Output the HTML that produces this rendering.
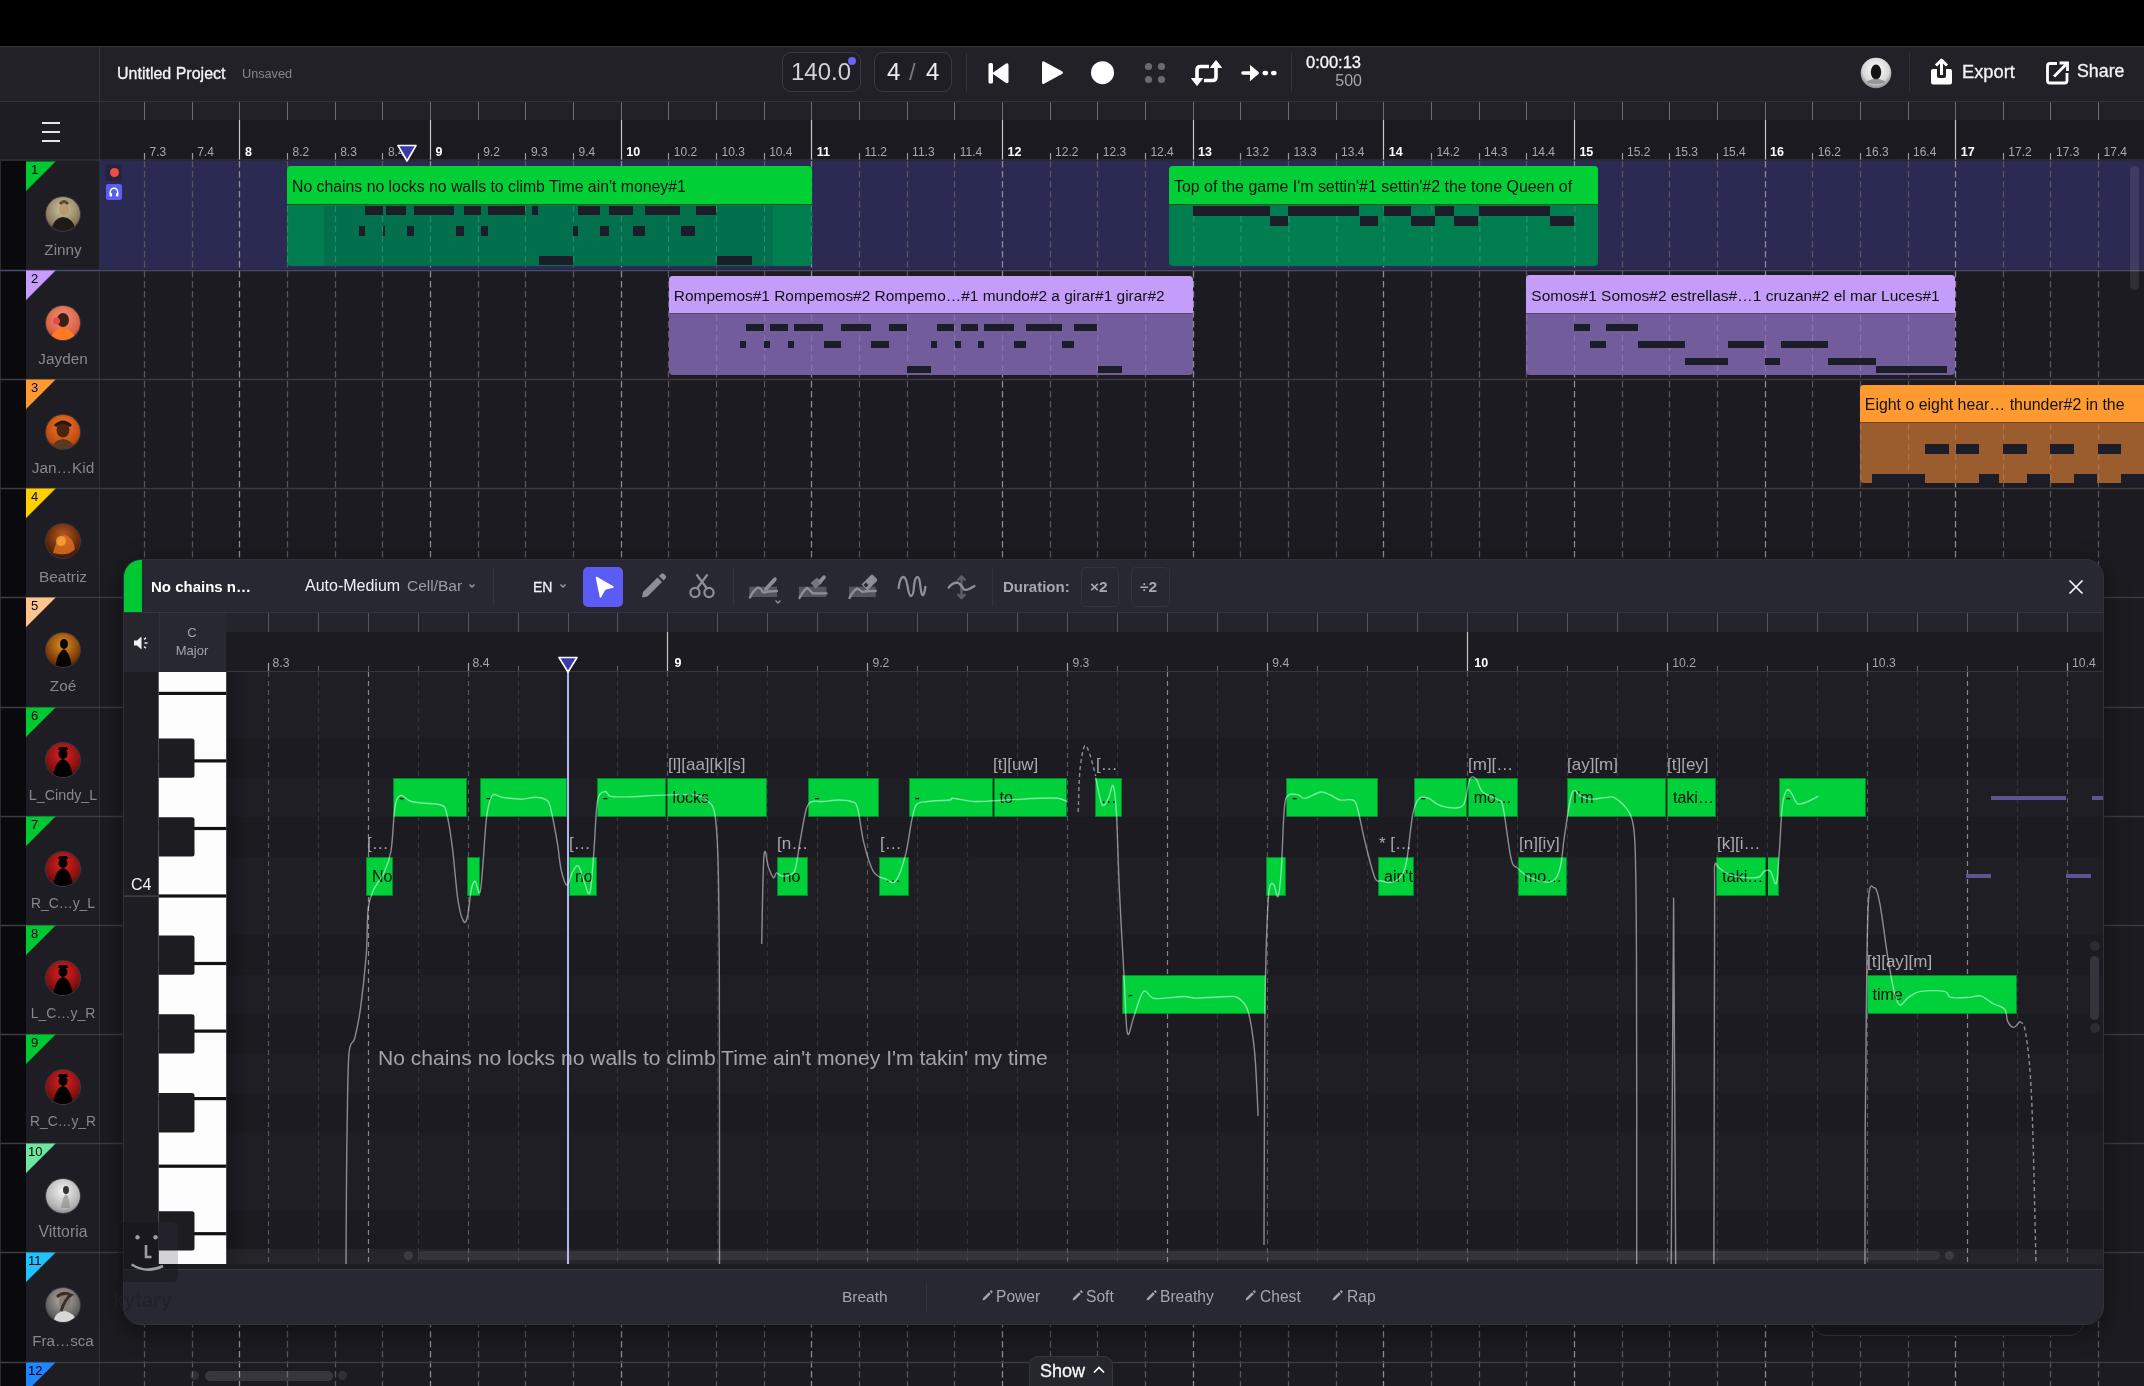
<!DOCTYPE html><html><head><meta charset="utf-8"><title>DAW</title><style>
*{margin:0;padding:0;box-sizing:border-box}
html,body{width:2144px;height:1386px;overflow:hidden;background:#000;font-family:"Liberation Sans", sans-serif;}
.a{position:absolute}
.t{position:absolute;white-space:nowrap;line-height:1}
</style></head><body>
<div class="a" style="left:0;top:46px;width:2144px;height:55px;background:#222127;border-top:1px solid #38373e;"></div>
<div class="a" style="left:99px;top:46px;width:1px;height:55px;background:#34343c"></div>
<div class="t" style="left:117px;top:66px;font-size:16px;color:#f4f4f6;-webkit-text-stroke:0.3px #f4f4f6;">Untitled Project</div>
<div class="t" style="left:242px;top:68px;font-size:12.7px;color:#86868e;">Unsaved</div>
<div class="a" style="left:782px;top:52px;width:79px;height:40px;border:1px solid #393a44;border-radius:9px;background:#1e1e24"></div>
<div class="t" style="left:791px;top:60px;font-size:24px;color:#d0d0d6;">140.0</div>
<div class="a" style="left:848px;top:57px;width:8px;height:8px;border-radius:50%;background:#6466f6"></div>
<div class="a" style="left:874px;top:52px;width:78px;height:40px;border:1px solid #393a44;border-radius:9px;background:#1e1e24"></div>
<div class="t" style="left:887px;top:60px;font-size:24px;color:#ececf0;">4</div>
<div class="t" style="left:909px;top:60px;font-size:24px;color:#77777f;">/</div>
<div class="t" style="left:926px;top:60px;font-size:24px;color:#ececf0;">4</div>
<div class="a" style="left:966px;top:53px;width:1px;height:39px;background:#33333b"></div>
<div class="a" style="left:1291px;top:53px;width:1px;height:39px;background:#33333b"></div>
<div class="a" style="left:1909px;top:53px;width:1px;height:39px;background:#33333b"></div>
<svg class="a" style="left:980px;top:55px" width="310" height="40" viewBox="980 55 310 40">
<rect x="988.5" y="63" width="4.5" height="20.5" rx="1.5" fill="#fff"/>
<path d="M992 73.2 L1006 63.5 Q1008.5 62.5 1008.5 65 L1008.5 81.5 Q1008.5 84 1006 83 Z" fill="#fff"/>
<path d="M1042 63 Q1042 60.5 1044.5 61.8 L1062 71.2 Q1064 72.6 1062 74 L1044.5 83.6 Q1042 85 1042 82.5 Z" fill="#fff"/>
<circle cx="1102.5" cy="72.7" r="11.5" fill="#fff"/>
<circle cx="1148.5" cy="66.5" r="3.6" fill="#6a6a72"/><circle cx="1161.5" cy="66.5" r="3.6" fill="#6a6a72"/>
<circle cx="1148.5" cy="79.5" r="3.6" fill="#6a6a72"/><circle cx="1161.5" cy="79.5" r="3.6" fill="#6a6a72"/>
<path d="M1197 83 L1197 70 Q1197 66.5 1200.5 66.5 L1209 66.5" stroke="#fff" stroke-width="3.6" fill="none"/>
<path d="M1216 63 L1216 77 Q1216 80.5 1212.5 80.5 L1204 80.5" stroke="#fff" stroke-width="3.6" fill="none"/>
<path d="M1191.5 78.5 L1197 85.5 L1202.5 78.5 Z" fill="#fff" stroke="#fff" stroke-width="1" stroke-linejoin="round"/>
<path d="M1210.5 67.5 L1216 60.5 L1221.5 67.5 Z" fill="#fff" stroke="#fff" stroke-width="1" stroke-linejoin="round"/>
<path d="M1243 73 L1252 73" stroke="#fff" stroke-width="3.6" stroke-linecap="round"/>
<path d="M1250 66 Q1249 64.5 1250.5 65.2 L1258.5 72 Q1259.5 73 1258.5 74 L1250.5 80.8 Q1249 81.5 1250 80Z" fill="#fff"/>
<ellipse cx="1265.3" cy="73" rx="2.8" ry="2.3" fill="#fff"/><ellipse cx="1273.8" cy="73" rx="2.8" ry="2.3" fill="#fff"/>
</svg>
<div class="t" style="left:1306px;top:54px;font-size:16.5px;color:#f6f6f8;-webkit-text-stroke:0.3px #f6f6f8;">0:00:13</div>
<div class="t" style="left:1362px;top:73px;font-size:16px;color:#a4a4ac;transform:translateX(-100%)">500</div>
<svg class="a" style="left:1858px;top:55px" width="36" height="36" viewBox="0 0 36 36">
<defs><radialGradient id="avg" cx="50%" cy="40%" r="60%"><stop offset="0" stop-color="#ffffff"/><stop offset="0.7" stop-color="#d8d8d8"/><stop offset="1" stop-color="#8a8a8a"/></radialGradient></defs>
<circle cx="18" cy="18" r="15.3" fill="url(#avg)"/>
<ellipse cx="18" cy="17" rx="5.2" ry="7.5" fill="#141414"/>
<path d="M8 27 Q18 20 28 27 Q18 31 8 27Z" fill="#6a6a6a" opacity=".6"/>
</svg>
<svg class="a" style="left:1928px;top:57px" width="28" height="30" viewBox="1928 57 28 30">
<path d="M1941.5 60 L1941.5 75" stroke="#fff" stroke-width="3"/>
<path d="M1936 65.5 L1941.5 60 L1947 65.5" stroke="#fff" stroke-width="3" fill="none" stroke-linejoin="round"/>
<path d="M1933 69 L1937 69 L1937 76 Q1937 78 1939 78 L1944 78 Q1946 78 1946 76 L1946 69 L1950 69 Q1952 69 1952 71 L1952 82.5 Q1952 84.5 1950 84.5 L1933 84.5 Q1931 84.5 1931 82.5 L1931 71 Q1931 69 1933 69Z" fill="#fff"/>
</svg>
<div class="t" style="left:1962px;top:63px;font-size:18.3px;color:#f4f4f6;-webkit-text-stroke:0.3px #f4f4f6;">Export</div>
<svg class="a" style="left:2044px;top:60px" width="26" height="26" viewBox="2044 60 26 26">
<path d="M2057 63.5 L2050 63.5 Q2047.5 63.5 2047.5 66 L2047.5 80.5 Q2047.5 83 2050 83 L2064.5 83 Q2067 83 2067 80.5 L2067 73" stroke="#fff" stroke-width="2.8" fill="none"/>
<path d="M2054 76.5 L2066 64.5" stroke="#fff" stroke-width="2.8"/>
<path d="M2059.5 63 L2067.5 63 L2067.5 71" stroke="#fff" stroke-width="2.8" fill="none"/>
</svg>
<div class="t" style="left:2077px;top:63px;font-size:17.8px;color:#f4f4f6;-webkit-text-stroke:0.3px #f4f4f6;">Share</div>
<div class="a" style="left:0;top:101px;width:2144px;height:60px;background:#1b1a20;border-top:1px solid #2f3040"></div>
<div class="a" style="left:100px;top:102px;width:2044px;height:18px;background:#222127"></div>
<div class="a" style="left:0;top:102px;width:99px;height:58px;background:#1e1d23"></div>
<div class="a" style="left:99px;top:101px;width:1px;height:60px;background:#30303a"></div>
<div class="a" style="left:42px;top:122px;width:18px;height:2px;background:#e6e6ea"></div>
<div class="a" style="left:42px;top:131px;width:18px;height:2px;background:#e6e6ea"></div>
<div class="a" style="left:42px;top:140px;width:18px;height:2px;background:#e6e6ea"></div>
<svg class="a" style="left:0;top:101px" width="2144" height="60" viewBox="0 101 2144 60"><line x1="144.5" y1="102" x2="144.5" y2="120" stroke="#6a6a72" stroke-width="1"/><line x1="144.5" y1="153" x2="144.5" y2="160" stroke="#9a9aa0" stroke-width="1.2"/><line x1="192.5" y1="102" x2="192.5" y2="120" stroke="#6a6a72" stroke-width="1"/><line x1="192.5" y1="153" x2="192.5" y2="160" stroke="#9a9aa0" stroke-width="1.2"/><line x1="239.5" y1="102" x2="239.5" y2="120" stroke="#6a6a72" stroke-width="1"/><line x1="239.5" y1="120" x2="239.5" y2="160" stroke="#c8c8cc" stroke-width="1.2"/><line x1="287.5" y1="102" x2="287.5" y2="120" stroke="#6a6a72" stroke-width="1"/><line x1="287.5" y1="153" x2="287.5" y2="160" stroke="#9a9aa0" stroke-width="1.2"/><line x1="335.5" y1="102" x2="335.5" y2="120" stroke="#6a6a72" stroke-width="1"/><line x1="335.5" y1="153" x2="335.5" y2="160" stroke="#9a9aa0" stroke-width="1.2"/><line x1="382.5" y1="102" x2="382.5" y2="120" stroke="#6a6a72" stroke-width="1"/><line x1="382.5" y1="153" x2="382.5" y2="160" stroke="#9a9aa0" stroke-width="1.2"/><line x1="430.5" y1="102" x2="430.5" y2="120" stroke="#6a6a72" stroke-width="1"/><line x1="430.5" y1="120" x2="430.5" y2="160" stroke="#c8c8cc" stroke-width="1.2"/><line x1="478.5" y1="102" x2="478.5" y2="120" stroke="#6a6a72" stroke-width="1"/><line x1="478.5" y1="153" x2="478.5" y2="160" stroke="#9a9aa0" stroke-width="1.2"/><line x1="525.5" y1="102" x2="525.5" y2="120" stroke="#6a6a72" stroke-width="1"/><line x1="525.5" y1="153" x2="525.5" y2="160" stroke="#9a9aa0" stroke-width="1.2"/><line x1="573.5" y1="102" x2="573.5" y2="120" stroke="#6a6a72" stroke-width="1"/><line x1="573.5" y1="153" x2="573.5" y2="160" stroke="#9a9aa0" stroke-width="1.2"/><line x1="621.5" y1="102" x2="621.5" y2="120" stroke="#6a6a72" stroke-width="1"/><line x1="621.5" y1="120" x2="621.5" y2="160" stroke="#c8c8cc" stroke-width="1.2"/><line x1="668.5" y1="102" x2="668.5" y2="120" stroke="#6a6a72" stroke-width="1"/><line x1="668.5" y1="153" x2="668.5" y2="160" stroke="#9a9aa0" stroke-width="1.2"/><line x1="716.5" y1="102" x2="716.5" y2="120" stroke="#6a6a72" stroke-width="1"/><line x1="716.5" y1="153" x2="716.5" y2="160" stroke="#9a9aa0" stroke-width="1.2"/><line x1="764.5" y1="102" x2="764.5" y2="120" stroke="#6a6a72" stroke-width="1"/><line x1="764.5" y1="153" x2="764.5" y2="160" stroke="#9a9aa0" stroke-width="1.2"/><line x1="811.5" y1="102" x2="811.5" y2="120" stroke="#6a6a72" stroke-width="1"/><line x1="811.5" y1="120" x2="811.5" y2="160" stroke="#c8c8cc" stroke-width="1.2"/><line x1="859.5" y1="102" x2="859.5" y2="120" stroke="#6a6a72" stroke-width="1"/><line x1="859.5" y1="153" x2="859.5" y2="160" stroke="#9a9aa0" stroke-width="1.2"/><line x1="907.5" y1="102" x2="907.5" y2="120" stroke="#6a6a72" stroke-width="1"/><line x1="907.5" y1="153" x2="907.5" y2="160" stroke="#9a9aa0" stroke-width="1.2"/><line x1="954.5" y1="102" x2="954.5" y2="120" stroke="#6a6a72" stroke-width="1"/><line x1="954.5" y1="153" x2="954.5" y2="160" stroke="#9a9aa0" stroke-width="1.2"/><line x1="1002.5" y1="102" x2="1002.5" y2="120" stroke="#6a6a72" stroke-width="1"/><line x1="1002.5" y1="120" x2="1002.5" y2="160" stroke="#c8c8cc" stroke-width="1.2"/><line x1="1050.5" y1="102" x2="1050.5" y2="120" stroke="#6a6a72" stroke-width="1"/><line x1="1050.5" y1="153" x2="1050.5" y2="160" stroke="#9a9aa0" stroke-width="1.2"/><line x1="1097.5" y1="102" x2="1097.5" y2="120" stroke="#6a6a72" stroke-width="1"/><line x1="1097.5" y1="153" x2="1097.5" y2="160" stroke="#9a9aa0" stroke-width="1.2"/><line x1="1145.5" y1="102" x2="1145.5" y2="120" stroke="#6a6a72" stroke-width="1"/><line x1="1145.5" y1="153" x2="1145.5" y2="160" stroke="#9a9aa0" stroke-width="1.2"/><line x1="1193.5" y1="102" x2="1193.5" y2="120" stroke="#6a6a72" stroke-width="1"/><line x1="1193.5" y1="120" x2="1193.5" y2="160" stroke="#c8c8cc" stroke-width="1.2"/><line x1="1240.5" y1="102" x2="1240.5" y2="120" stroke="#6a6a72" stroke-width="1"/><line x1="1240.5" y1="153" x2="1240.5" y2="160" stroke="#9a9aa0" stroke-width="1.2"/><line x1="1288.5" y1="102" x2="1288.5" y2="120" stroke="#6a6a72" stroke-width="1"/><line x1="1288.5" y1="153" x2="1288.5" y2="160" stroke="#9a9aa0" stroke-width="1.2"/><line x1="1336.5" y1="102" x2="1336.5" y2="120" stroke="#6a6a72" stroke-width="1"/><line x1="1336.5" y1="153" x2="1336.5" y2="160" stroke="#9a9aa0" stroke-width="1.2"/><line x1="1383.5" y1="102" x2="1383.5" y2="120" stroke="#6a6a72" stroke-width="1"/><line x1="1383.5" y1="120" x2="1383.5" y2="160" stroke="#c8c8cc" stroke-width="1.2"/><line x1="1431.5" y1="102" x2="1431.5" y2="120" stroke="#6a6a72" stroke-width="1"/><line x1="1431.5" y1="153" x2="1431.5" y2="160" stroke="#9a9aa0" stroke-width="1.2"/><line x1="1479.5" y1="102" x2="1479.5" y2="120" stroke="#6a6a72" stroke-width="1"/><line x1="1479.5" y1="153" x2="1479.5" y2="160" stroke="#9a9aa0" stroke-width="1.2"/><line x1="1526.5" y1="102" x2="1526.5" y2="120" stroke="#6a6a72" stroke-width="1"/><line x1="1526.5" y1="153" x2="1526.5" y2="160" stroke="#9a9aa0" stroke-width="1.2"/><line x1="1574.5" y1="102" x2="1574.5" y2="120" stroke="#6a6a72" stroke-width="1"/><line x1="1574.5" y1="120" x2="1574.5" y2="160" stroke="#c8c8cc" stroke-width="1.2"/><line x1="1622.5" y1="102" x2="1622.5" y2="120" stroke="#6a6a72" stroke-width="1"/><line x1="1622.5" y1="153" x2="1622.5" y2="160" stroke="#9a9aa0" stroke-width="1.2"/><line x1="1669.5" y1="102" x2="1669.5" y2="120" stroke="#6a6a72" stroke-width="1"/><line x1="1669.5" y1="153" x2="1669.5" y2="160" stroke="#9a9aa0" stroke-width="1.2"/><line x1="1717.5" y1="102" x2="1717.5" y2="120" stroke="#6a6a72" stroke-width="1"/><line x1="1717.5" y1="153" x2="1717.5" y2="160" stroke="#9a9aa0" stroke-width="1.2"/><line x1="1765.5" y1="102" x2="1765.5" y2="120" stroke="#6a6a72" stroke-width="1"/><line x1="1765.5" y1="120" x2="1765.5" y2="160" stroke="#c8c8cc" stroke-width="1.2"/><line x1="1812.5" y1="102" x2="1812.5" y2="120" stroke="#6a6a72" stroke-width="1"/><line x1="1812.5" y1="153" x2="1812.5" y2="160" stroke="#9a9aa0" stroke-width="1.2"/><line x1="1860.5" y1="102" x2="1860.5" y2="120" stroke="#6a6a72" stroke-width="1"/><line x1="1860.5" y1="153" x2="1860.5" y2="160" stroke="#9a9aa0" stroke-width="1.2"/><line x1="1908.5" y1="102" x2="1908.5" y2="120" stroke="#6a6a72" stroke-width="1"/><line x1="1908.5" y1="153" x2="1908.5" y2="160" stroke="#9a9aa0" stroke-width="1.2"/><line x1="1955.5" y1="102" x2="1955.5" y2="120" stroke="#6a6a72" stroke-width="1"/><line x1="1955.5" y1="120" x2="1955.5" y2="160" stroke="#c8c8cc" stroke-width="1.2"/><line x1="2003.5" y1="102" x2="2003.5" y2="120" stroke="#6a6a72" stroke-width="1"/><line x1="2003.5" y1="153" x2="2003.5" y2="160" stroke="#9a9aa0" stroke-width="1.2"/><line x1="2050.5" y1="102" x2="2050.5" y2="120" stroke="#6a6a72" stroke-width="1"/><line x1="2050.5" y1="153" x2="2050.5" y2="160" stroke="#9a9aa0" stroke-width="1.2"/><line x1="2098.5" y1="102" x2="2098.5" y2="120" stroke="#6a6a72" stroke-width="1"/><line x1="2098.5" y1="153" x2="2098.5" y2="160" stroke="#9a9aa0" stroke-width="1.2"/><line x1="0" y1="160" x2="2144" y2="160" stroke="#3a3a44" stroke-width="1"/></svg>
<div class="t" style="left:149.6px;top:146px;font-size:12px;color:#a8a8ae;">7.3</div>
<div class="t" style="left:197.2px;top:146px;font-size:12px;color:#a8a8ae;">7.4</div>
<div class="t" style="left:244.9px;top:146px;font-size:12.5px;font-weight:bold;color:#fff;">8</div>
<div class="t" style="left:292.6px;top:146px;font-size:12px;color:#a8a8ae;">8.2</div>
<div class="t" style="left:340.2px;top:146px;font-size:12px;color:#a8a8ae;">8.3</div>
<div class="t" style="left:387.9px;top:146px;font-size:12px;color:#a8a8ae;">8.4</div>
<div class="t" style="left:435.5px;top:146px;font-size:12.5px;font-weight:bold;color:#fff;">9</div>
<div class="t" style="left:483.2px;top:146px;font-size:12px;color:#a8a8ae;">9.2</div>
<div class="t" style="left:530.9px;top:146px;font-size:12px;color:#a8a8ae;">9.3</div>
<div class="t" style="left:578.5px;top:146px;font-size:12px;color:#a8a8ae;">9.4</div>
<div class="t" style="left:626.2px;top:146px;font-size:12.5px;font-weight:bold;color:#fff;">10</div>
<div class="t" style="left:673.8px;top:146px;font-size:12px;color:#a8a8ae;">10.2</div>
<div class="t" style="left:721.5px;top:146px;font-size:12px;color:#a8a8ae;">10.3</div>
<div class="t" style="left:769.2px;top:146px;font-size:12px;color:#a8a8ae;">10.4</div>
<div class="t" style="left:816.8px;top:146px;font-size:12.5px;font-weight:bold;color:#fff;">11</div>
<div class="t" style="left:864.5px;top:146px;font-size:12px;color:#a8a8ae;">11.2</div>
<div class="t" style="left:912.1px;top:146px;font-size:12px;color:#a8a8ae;">11.3</div>
<div class="t" style="left:959.8px;top:146px;font-size:12px;color:#a8a8ae;">11.4</div>
<div class="t" style="left:1007.5px;top:146px;font-size:12.5px;font-weight:bold;color:#fff;">12</div>
<div class="t" style="left:1055.1px;top:146px;font-size:12px;color:#a8a8ae;">12.2</div>
<div class="t" style="left:1102.8px;top:146px;font-size:12px;color:#a8a8ae;">12.3</div>
<div class="t" style="left:1150.4px;top:146px;font-size:12px;color:#a8a8ae;">12.4</div>
<div class="t" style="left:1198.1px;top:146px;font-size:12.5px;font-weight:bold;color:#fff;">13</div>
<div class="t" style="left:1245.8px;top:146px;font-size:12px;color:#a8a8ae;">13.2</div>
<div class="t" style="left:1293.4px;top:146px;font-size:12px;color:#a8a8ae;">13.3</div>
<div class="t" style="left:1341.1px;top:146px;font-size:12px;color:#a8a8ae;">13.4</div>
<div class="t" style="left:1388.7px;top:146px;font-size:12.5px;font-weight:bold;color:#fff;">14</div>
<div class="t" style="left:1436.4px;top:146px;font-size:12px;color:#a8a8ae;">14.2</div>
<div class="t" style="left:1484.1px;top:146px;font-size:12px;color:#a8a8ae;">14.3</div>
<div class="t" style="left:1531.7px;top:146px;font-size:12px;color:#a8a8ae;">14.4</div>
<div class="t" style="left:1579.4px;top:146px;font-size:12.5px;font-weight:bold;color:#fff;">15</div>
<div class="t" style="left:1627.0px;top:146px;font-size:12px;color:#a8a8ae;">15.2</div>
<div class="t" style="left:1674.7px;top:146px;font-size:12px;color:#a8a8ae;">15.3</div>
<div class="t" style="left:1722.4px;top:146px;font-size:12px;color:#a8a8ae;">15.4</div>
<div class="t" style="left:1770.0px;top:146px;font-size:12.5px;font-weight:bold;color:#fff;">16</div>
<div class="t" style="left:1817.7px;top:146px;font-size:12px;color:#a8a8ae;">16.2</div>
<div class="t" style="left:1865.3px;top:146px;font-size:12px;color:#a8a8ae;">16.3</div>
<div class="t" style="left:1913.0px;top:146px;font-size:12px;color:#a8a8ae;">16.4</div>
<div class="t" style="left:1960.7px;top:146px;font-size:12.5px;font-weight:bold;color:#fff;">17</div>
<div class="t" style="left:2008.3px;top:146px;font-size:12px;color:#a8a8ae;">17.2</div>
<div class="t" style="left:2056.0px;top:146px;font-size:12px;color:#a8a8ae;">17.3</div>
<div class="t" style="left:2103.6px;top:146px;font-size:12px;color:#a8a8ae;">17.4</div>
<div class="a" style="left:0;top:161px;width:2144px;height:1225px;background:#1c1b21"></div>
<div class="a" style="left:100px;top:161px;width:2044px;height:108px;background:#2b2a52"></div>
<div class="a" style="left:0;top:161px;width:26px;height:1225px;background:#0a0a0d"></div>
<div class="a" style="left:26px;top:161px;width:73px;height:1225px;background:#1e1d23"></div>
<div class="a" style="left:99px;top:161px;width:1px;height:1225px;background:#2e2e36"></div>
<div class="a" style="left:0;top:161px;width:1px;height:1225px;background:#2a2a30"></div>
<svg class="a" style="left:0;top:0" width="2144" height="1386" viewBox="0 0 2144 1386"><line x1="144.5" y1="161" x2="144.5" y2="1386" stroke="#56555c" stroke-width="1.3" stroke-dasharray="6.5 3.5"/><line x1="192.5" y1="161" x2="192.5" y2="1386" stroke="#56555c" stroke-width="1.3" stroke-dasharray="6.5 3.5"/><line x1="239.5" y1="161" x2="239.5" y2="1386" stroke="#8c8c92" stroke-width="1.3" stroke-dasharray="6.5 3.5"/><line x1="287.5" y1="161" x2="287.5" y2="1386" stroke="#56555c" stroke-width="1.3" stroke-dasharray="6.5 3.5"/><line x1="335.5" y1="161" x2="335.5" y2="1386" stroke="#56555c" stroke-width="1.3" stroke-dasharray="6.5 3.5"/><line x1="382.5" y1="161" x2="382.5" y2="1386" stroke="#56555c" stroke-width="1.3" stroke-dasharray="6.5 3.5"/><line x1="430.5" y1="161" x2="430.5" y2="1386" stroke="#8c8c92" stroke-width="1.3" stroke-dasharray="6.5 3.5"/><line x1="478.5" y1="161" x2="478.5" y2="1386" stroke="#56555c" stroke-width="1.3" stroke-dasharray="6.5 3.5"/><line x1="525.5" y1="161" x2="525.5" y2="1386" stroke="#56555c" stroke-width="1.3" stroke-dasharray="6.5 3.5"/><line x1="573.5" y1="161" x2="573.5" y2="1386" stroke="#56555c" stroke-width="1.3" stroke-dasharray="6.5 3.5"/><line x1="621.5" y1="161" x2="621.5" y2="1386" stroke="#8c8c92" stroke-width="1.3" stroke-dasharray="6.5 3.5"/><line x1="668.5" y1="161" x2="668.5" y2="1386" stroke="#56555c" stroke-width="1.3" stroke-dasharray="6.5 3.5"/><line x1="716.5" y1="161" x2="716.5" y2="1386" stroke="#56555c" stroke-width="1.3" stroke-dasharray="6.5 3.5"/><line x1="764.5" y1="161" x2="764.5" y2="1386" stroke="#56555c" stroke-width="1.3" stroke-dasharray="6.5 3.5"/><line x1="811.5" y1="161" x2="811.5" y2="1386" stroke="#8c8c92" stroke-width="1.3" stroke-dasharray="6.5 3.5"/><line x1="859.5" y1="161" x2="859.5" y2="1386" stroke="#56555c" stroke-width="1.3" stroke-dasharray="6.5 3.5"/><line x1="907.5" y1="161" x2="907.5" y2="1386" stroke="#56555c" stroke-width="1.3" stroke-dasharray="6.5 3.5"/><line x1="954.5" y1="161" x2="954.5" y2="1386" stroke="#56555c" stroke-width="1.3" stroke-dasharray="6.5 3.5"/><line x1="1002.5" y1="161" x2="1002.5" y2="1386" stroke="#8c8c92" stroke-width="1.3" stroke-dasharray="6.5 3.5"/><line x1="1050.5" y1="161" x2="1050.5" y2="1386" stroke="#56555c" stroke-width="1.3" stroke-dasharray="6.5 3.5"/><line x1="1097.5" y1="161" x2="1097.5" y2="1386" stroke="#56555c" stroke-width="1.3" stroke-dasharray="6.5 3.5"/><line x1="1145.5" y1="161" x2="1145.5" y2="1386" stroke="#56555c" stroke-width="1.3" stroke-dasharray="6.5 3.5"/><line x1="1193.5" y1="161" x2="1193.5" y2="1386" stroke="#8c8c92" stroke-width="1.3" stroke-dasharray="6.5 3.5"/><line x1="1240.5" y1="161" x2="1240.5" y2="1386" stroke="#56555c" stroke-width="1.3" stroke-dasharray="6.5 3.5"/><line x1="1288.5" y1="161" x2="1288.5" y2="1386" stroke="#56555c" stroke-width="1.3" stroke-dasharray="6.5 3.5"/><line x1="1336.5" y1="161" x2="1336.5" y2="1386" stroke="#56555c" stroke-width="1.3" stroke-dasharray="6.5 3.5"/><line x1="1383.5" y1="161" x2="1383.5" y2="1386" stroke="#8c8c92" stroke-width="1.3" stroke-dasharray="6.5 3.5"/><line x1="1431.5" y1="161" x2="1431.5" y2="1386" stroke="#56555c" stroke-width="1.3" stroke-dasharray="6.5 3.5"/><line x1="1479.5" y1="161" x2="1479.5" y2="1386" stroke="#56555c" stroke-width="1.3" stroke-dasharray="6.5 3.5"/><line x1="1526.5" y1="161" x2="1526.5" y2="1386" stroke="#56555c" stroke-width="1.3" stroke-dasharray="6.5 3.5"/><line x1="1574.5" y1="161" x2="1574.5" y2="1386" stroke="#8c8c92" stroke-width="1.3" stroke-dasharray="6.5 3.5"/><line x1="1622.5" y1="161" x2="1622.5" y2="1386" stroke="#56555c" stroke-width="1.3" stroke-dasharray="6.5 3.5"/><line x1="1669.5" y1="161" x2="1669.5" y2="1386" stroke="#56555c" stroke-width="1.3" stroke-dasharray="6.5 3.5"/><line x1="1717.5" y1="161" x2="1717.5" y2="1386" stroke="#56555c" stroke-width="1.3" stroke-dasharray="6.5 3.5"/><line x1="1765.5" y1="161" x2="1765.5" y2="1386" stroke="#8c8c92" stroke-width="1.3" stroke-dasharray="6.5 3.5"/><line x1="1812.5" y1="161" x2="1812.5" y2="1386" stroke="#56555c" stroke-width="1.3" stroke-dasharray="6.5 3.5"/><line x1="1860.5" y1="161" x2="1860.5" y2="1386" stroke="#56555c" stroke-width="1.3" stroke-dasharray="6.5 3.5"/><line x1="1908.5" y1="161" x2="1908.5" y2="1386" stroke="#56555c" stroke-width="1.3" stroke-dasharray="6.5 3.5"/><line x1="1955.5" y1="161" x2="1955.5" y2="1386" stroke="#8c8c92" stroke-width="1.3" stroke-dasharray="6.5 3.5"/><line x1="2003.5" y1="161" x2="2003.5" y2="1386" stroke="#56555c" stroke-width="1.3" stroke-dasharray="6.5 3.5"/><line x1="2050.5" y1="161" x2="2050.5" y2="1386" stroke="#56555c" stroke-width="1.3" stroke-dasharray="6.5 3.5"/><line x1="2098.5" y1="161" x2="2098.5" y2="1386" stroke="#56555c" stroke-width="1.3" stroke-dasharray="6.5 3.5"/><line x1="0" y1="270.5" x2="2144" y2="270.5" stroke="#4a4a72" stroke-width="1.3"/><line x1="0" y1="379.5" x2="2144" y2="379.5" stroke="#3c3b42" stroke-width="1.3"/><line x1="0" y1="488.5" x2="2144" y2="488.5" stroke="#3c3b42" stroke-width="1.3"/><line x1="0" y1="597.5" x2="2144" y2="597.5" stroke="#3c3b42" stroke-width="1.3"/><line x1="0" y1="707.5" x2="2144" y2="707.5" stroke="#3c3b42" stroke-width="1.3"/><line x1="0" y1="816.5" x2="2144" y2="816.5" stroke="#3c3b42" stroke-width="1.3"/><line x1="0" y1="925.5" x2="2144" y2="925.5" stroke="#3c3b42" stroke-width="1.3"/><line x1="0" y1="1034.5" x2="2144" y2="1034.5" stroke="#3c3b42" stroke-width="1.3"/><line x1="0" y1="1143.5" x2="2144" y2="1143.5" stroke="#3c3b42" stroke-width="1.3"/><line x1="0" y1="1252.5" x2="2144" y2="1252.5" stroke="#3c3b42" stroke-width="1.3"/><line x1="0" y1="1362.5" x2="2144" y2="1362.5" stroke="#3c3b42" stroke-width="1.3"/></svg>
<svg class="a" style="left:26px;top:160.6px" width="31" height="31"><path d="M0 0.5 L30 0.5 L0 30.5Z" fill="#00c832"/><path d="M30 0.5 L0 30.5" stroke="rgba(0,0,0,.55)" stroke-width="1"/></svg>
<div class="t" style="left:31px;top:162.6px;font-size:13px;color:#000;">1</div>
<div class="a" style="left:45px;top:195.6px;width:36px;height:36px;border-radius:50%;overflow:hidden;background:radial-gradient(circle at 50% 35%, #cfc6a8 0%, #8a7a5a 65%, #2a2420 100%);border:1px solid #3a3a40"><svg width="36" height="36" viewBox="0 0 36 36" style="position:absolute;left:-1px;top:-1px"><ellipse cx="19" cy="13" rx="5" ry="6.5" fill="#b89a70"/><path d="M6 36 Q8 22 18 21 Q29 22 31 36Z" fill="#1e1a18"/><path d="M15 8 Q19 3 23 8" stroke="#5a4a30" stroke-width="3" fill="none"/></svg></div>
<div class="t" style="left:63px;top:241.6px;font-size:15.3px;color:#88878e;transform:translateX(-50%)">Zinny</div>
<svg class="a" style="left:26px;top:269.8px" width="31" height="31"><path d="M0 0.5 L30 0.5 L0 30.5Z" fill="#c89cfa"/><path d="M30 0.5 L0 30.5" stroke="rgba(0,0,0,.55)" stroke-width="1"/></svg>
<div class="t" style="left:31px;top:271.8px;font-size:13px;color:#000;">2</div>
<div class="a" style="left:45px;top:304.8px;width:36px;height:36px;border-radius:50%;overflow:hidden;background:radial-gradient(circle at 50% 35%, #f0907a 0%, #d86040 65%, #402010 100%);border:1px solid #3a3a40"><svg width="36" height="36" viewBox="0 0 36 36" style="position:absolute;left:-1px;top:-1px"><ellipse cx="18" cy="15" rx="6" ry="7" fill="#3a2010"/><path d="M5 36 Q7 24 18 23 Q29 24 31 36Z" fill="#ff7a20"/><circle cx="11.5" cy="16" r="3.5" fill="#e84a4a"/></svg></div>
<div class="t" style="left:63px;top:350.8px;font-size:15.3px;color:#88878e;transform:translateX(-50%)">Jayden</div>
<svg class="a" style="left:26px;top:379.0px" width="31" height="31"><path d="M0 0.5 L30 0.5 L0 30.5Z" fill="#ff9a33"/><path d="M30 0.5 L0 30.5" stroke="rgba(0,0,0,.55)" stroke-width="1"/></svg>
<div class="t" style="left:31px;top:381.0px;font-size:13px;color:#000;">3</div>
<div class="a" style="left:45px;top:414.0px;width:36px;height:36px;border-radius:50%;overflow:hidden;background:radial-gradient(circle at 50% 35%, #f07828 0%, #c04a10 65%, #301808 100%);border:1px solid #3a3a40"><svg width="36" height="36" viewBox="0 0 36 36" style="position:absolute;left:-1px;top:-1px"><ellipse cx="18" cy="16" rx="6.5" ry="7.5" fill="#4a2410"/><path d="M6 36 Q8 26 18 25 Q28 26 30 36Z" fill="#5a3a20"/><path d="M10 12 Q18 4 26 12" stroke="#2a1408" stroke-width="3" fill="none"/></svg></div>
<div class="t" style="left:63px;top:460.0px;font-size:15.4px;color:#88878e;transform:translateX(-50%)">Jan…Kid</div>
<svg class="a" style="left:26px;top:488.1px" width="31" height="31"><path d="M0 0.5 L30 0.5 L0 30.5Z" fill="#ffd000"/><path d="M30 0.5 L0 30.5" stroke="rgba(0,0,0,.55)" stroke-width="1"/></svg>
<div class="t" style="left:31px;top:490.1px;font-size:13px;color:#000;">4</div>
<div class="a" style="left:45px;top:523.1px;width:36px;height:36px;border-radius:50%;overflow:hidden;background:radial-gradient(circle at 50% 35%, #b85a20 0%, #5a2408 65%, #1a0a04 100%);border:1px solid #3a3a40"><svg width="36" height="36" viewBox="0 0 36 36" style="position:absolute;left:-1px;top:-1px"><path d="M8 30 Q12 14 20 12 Q28 14 30 26 Q24 34 8 30Z" fill="#e07020" opacity=".8"/><circle cx="16" cy="18" r="5" fill="#ffb040" opacity=".7"/></svg></div>
<div class="t" style="left:63px;top:569.1px;font-size:15.5px;color:#88878e;transform:translateX(-50%)">Beatriz</div>
<svg class="a" style="left:26px;top:597.3px" width="31" height="31"><path d="M0 0.5 L30 0.5 L0 30.5Z" fill="#ffc48e"/><path d="M30 0.5 L0 30.5" stroke="rgba(0,0,0,.55)" stroke-width="1"/></svg>
<div class="t" style="left:31px;top:599.3px;font-size:13px;color:#000;">5</div>
<div class="a" style="left:45px;top:632.3px;width:36px;height:36px;border-radius:50%;overflow:hidden;background:radial-gradient(circle at 50% 35%, #e09020 0%, #7a3a08 65%, #0a0604 100%);border:1px solid #3a3a40"><svg width="36" height="36" viewBox="0 0 36 36" style="position:absolute;left:-1px;top:-1px"><ellipse cx="19" cy="12" rx="4" ry="5" fill="#0a0604"/><path d="M10 36 Q12 20 19 17 Q25 20 27 36Z" fill="#0a0604"/></svg></div>
<div class="t" style="left:63px;top:678.3px;font-size:15.3px;color:#88878e;transform:translateX(-50%)">Zoé</div>
<svg class="a" style="left:26px;top:706.5px" width="31" height="31"><path d="M0 0.5 L30 0.5 L0 30.5Z" fill="#00c832"/><path d="M30 0.5 L0 30.5" stroke="rgba(0,0,0,.55)" stroke-width="1"/></svg>
<div class="t" style="left:31px;top:708.5px;font-size:13px;color:#000;">6</div>
<div class="a" style="left:45px;top:741.5px;width:36px;height:36px;border-radius:50%;overflow:hidden;background:radial-gradient(circle at 50% 35%, #e02020 0%, #801010 65%, #000 100%);border:1px solid #3a3a40"><svg width="36" height="36" viewBox="0 0 36 36" style="position:absolute;left:-1px;top:-1px"><ellipse cx="18" cy="12" rx="4.5" ry="5" fill="#000"/><path d="M8 36 Q10 19 18 17 Q26 19 28 36Z" fill="#000"/><path d="M13 8 L23 8 L22 5 L14 5Z" fill="#000"/></svg></div>
<div class="t" style="left:63px;top:787.5px;font-size:14.3px;color:#88878e;transform:translateX(-50%)">L_Cindy_L</div>
<svg class="a" style="left:26px;top:815.7px" width="31" height="31"><path d="M0 0.5 L30 0.5 L0 30.5Z" fill="#00c832"/><path d="M30 0.5 L0 30.5" stroke="rgba(0,0,0,.55)" stroke-width="1"/></svg>
<div class="t" style="left:31px;top:817.7px;font-size:13px;color:#000;">7</div>
<div class="a" style="left:45px;top:850.7px;width:36px;height:36px;border-radius:50%;overflow:hidden;background:radial-gradient(circle at 50% 35%, #e02020 0%, #801010 65%, #000 100%);border:1px solid #3a3a40"><svg width="36" height="36" viewBox="0 0 36 36" style="position:absolute;left:-1px;top:-1px"><ellipse cx="18" cy="12" rx="4.5" ry="5" fill="#000"/><path d="M8 36 Q10 19 18 17 Q26 19 28 36Z" fill="#000"/><path d="M13 8 L23 8 L22 5 L14 5Z" fill="#000"/></svg></div>
<div class="t" style="left:63px;top:896.7px;font-size:13.9px;color:#88878e;transform:translateX(-50%)">R_C…y_L</div>
<svg class="a" style="left:26px;top:924.9px" width="31" height="31"><path d="M0 0.5 L30 0.5 L0 30.5Z" fill="#00c832"/><path d="M30 0.5 L0 30.5" stroke="rgba(0,0,0,.55)" stroke-width="1"/></svg>
<div class="t" style="left:31px;top:926.9px;font-size:13px;color:#000;">8</div>
<div class="a" style="left:45px;top:959.9px;width:36px;height:36px;border-radius:50%;overflow:hidden;background:radial-gradient(circle at 50% 35%, #e02020 0%, #801010 65%, #000 100%);border:1px solid #3a3a40"><svg width="36" height="36" viewBox="0 0 36 36" style="position:absolute;left:-1px;top:-1px"><ellipse cx="18" cy="12" rx="4.5" ry="5" fill="#000"/><path d="M8 36 Q10 19 18 17 Q26 19 28 36Z" fill="#000"/><path d="M13 8 L23 8 L22 5 L14 5Z" fill="#000"/></svg></div>
<div class="t" style="left:63px;top:1005.9px;font-size:14px;color:#88878e;transform:translateX(-50%)">L_C…y_R</div>
<svg class="a" style="left:26px;top:1034.0px" width="31" height="31"><path d="M0 0.5 L30 0.5 L0 30.5Z" fill="#00c832"/><path d="M30 0.5 L0 30.5" stroke="rgba(0,0,0,.55)" stroke-width="1"/></svg>
<div class="t" style="left:31px;top:1036.0px;font-size:13px;color:#000;">9</div>
<div class="a" style="left:45px;top:1069.0px;width:36px;height:36px;border-radius:50%;overflow:hidden;background:radial-gradient(circle at 50% 35%, #e02020 0%, #801010 65%, #000 100%);border:1px solid #3a3a40"><svg width="36" height="36" viewBox="0 0 36 36" style="position:absolute;left:-1px;top:-1px"><ellipse cx="18" cy="12" rx="4.5" ry="5" fill="#000"/><path d="M8 36 Q10 19 18 17 Q26 19 28 36Z" fill="#000"/><path d="M13 8 L23 8 L22 5 L14 5Z" fill="#000"/></svg></div>
<div class="t" style="left:63px;top:1115.0px;font-size:13.8px;color:#88878e;transform:translateX(-50%)">R_C…y_R</div>
<svg class="a" style="left:26px;top:1143.2px" width="31" height="31"><path d="M0 0.5 L30 0.5 L0 30.5Z" fill="#6fe6a0"/><path d="M30 0.5 L0 30.5" stroke="rgba(0,0,0,.55)" stroke-width="1"/></svg>
<div class="t" style="left:28px;top:1145.2px;font-size:13px;color:#000;">10</div>
<div class="a" style="left:45px;top:1178.2px;width:36px;height:36px;border-radius:50%;overflow:hidden;background:radial-gradient(circle at 50% 35%, #f4f4f4 0%, #b0b0b0 65%, #606060 100%);border:1px solid #3a3a40"><svg width="36" height="36" viewBox="0 0 36 36" style="position:absolute;left:-1px;top:-1px"><ellipse cx="21" cy="12" rx="3" ry="4" fill="#333"/><path d="M16 30 Q18 18 21 16 Q24 18 25 30Z" fill="#888" opacity=".6"/></svg></div>
<div class="t" style="left:63px;top:1224.2px;font-size:15.8px;color:#88878e;transform:translateX(-50%)">Vittoria</div>
<svg class="a" style="left:26px;top:1252.4px" width="31" height="31"><path d="M0 0.5 L30 0.5 L0 30.5Z" fill="#1ec3ff"/><path d="M30 0.5 L0 30.5" stroke="rgba(0,0,0,.55)" stroke-width="1"/></svg>
<div class="t" style="left:28px;top:1254.4px;font-size:13px;color:#000;">11</div>
<div class="a" style="left:45px;top:1287.4px;width:36px;height:36px;border-radius:50%;overflow:hidden;background:radial-gradient(circle at 50% 35%, #b8b0a8 0%, #606060 65%, #303030 100%);border:1px solid #3a3a40"><svg width="36" height="36" viewBox="0 0 36 36" style="position:absolute;left:-1px;top:-1px"><ellipse cx="20" cy="15" rx="6" ry="8" fill="#8a7a70"/><path d="M8 36 Q10 24 20 24 Q30 26 32 36Z" fill="#d8d8d8"/><path d="M12 10 Q18 4 26 8 Q20 12 16 24" stroke="#3a302a" stroke-width="3" fill="none"/></svg></div>
<div class="t" style="left:63px;top:1333.4px;font-size:15.2px;color:#88878e;transform:translateX(-50%)">Fra…sca</div>
<svg class="a" style="left:26px;top:1361.6px" width="31" height="31"><path d="M0 0.5 L30 0.5 L0 30.5Z" fill="#1f86ff"/><path d="M30 0.5 L0 30.5" stroke="rgba(0,0,0,.55)" stroke-width="1"/></svg>
<div class="t" style="left:28px;top:1363.6px;font-size:13px;color:#000;">12</div>
<div class="a" style="left:105px;top:164px;width:17px;height:17px;border-radius:4px;background:#25243f"></div>
<div class="a" style="left:109.5px;top:168px;width:9px;height:9px;border-radius:50%;background:#ee4c44"></div>
<div class="a" style="left:106px;top:184px;width:16px;height:16px;border-radius:2px;background:#5a5ef0"></div>
<svg class="a" style="left:106px;top:184px" width="16" height="16"><path d="M4.3 10 L4.3 8 A3.7 3.7 0 0 1 11.7 8 L11.7 10" stroke="#fff" stroke-width="1.5" fill="none"/><rect x="3.5" y="9" width="2.6" height="3.5" rx="1" fill="#fff"/><rect x="9.9" y="9" width="2.6" height="3.5" rx="1" fill="#fff"/></svg>
<div class="a" style="left:2130px;top:166px;width:9px;height:124px;border-radius:5px;background:rgba(255,255,255,.09)"></div>
<div class="a" style="left:287.0px;top:166.3px;width:525.0px;height:99.5px;border-radius:4px;overflow:hidden;background:#007e4f"><div class="a" style="left:0;top:0;width:100%;height:38.5px;background:#00d035;border-bottom:1.5px solid rgba(0,0,0,.55)"></div><div class="t" style="left:5px;top:12.8px;font-size:15.8px;color:#111;">No chains no locks no walls to climb Time ain't money#1</div>
<div class="a" style="left:37px;top:39.5px;width:449px;height:61.0px;background:rgba(20,30,70,.14)"></div>
<svg class="a" style="left:0;top:39.5px" width="525.0" height="61.0"><line x1="0.5" y1="0" x2="0.5" y2="61.0" stroke="rgba(255,255,255,.16)" stroke-width="1.2" stroke-dasharray="6 4"/><line x1="48.5" y1="0" x2="48.5" y2="61.0" stroke="rgba(255,255,255,.16)" stroke-width="1.2" stroke-dasharray="6 4"/><line x1="95.5" y1="0" x2="95.5" y2="61.0" stroke="rgba(255,255,255,.16)" stroke-width="1.2" stroke-dasharray="6 4"/><line x1="143.5" y1="0" x2="143.5" y2="61.0" stroke="rgba(255,255,255,.16)" stroke-width="1.2" stroke-dasharray="6 4"/><line x1="191.5" y1="0" x2="191.5" y2="61.0" stroke="rgba(255,255,255,.16)" stroke-width="1.2" stroke-dasharray="6 4"/><line x1="238.5" y1="0" x2="238.5" y2="61.0" stroke="rgba(255,255,255,.16)" stroke-width="1.2" stroke-dasharray="6 4"/><line x1="286.5" y1="0" x2="286.5" y2="61.0" stroke="rgba(255,255,255,.16)" stroke-width="1.2" stroke-dasharray="6 4"/><line x1="334.5" y1="0" x2="334.5" y2="61.0" stroke="rgba(255,255,255,.16)" stroke-width="1.2" stroke-dasharray="6 4"/><line x1="381.5" y1="0" x2="381.5" y2="61.0" stroke="rgba(255,255,255,.16)" stroke-width="1.2" stroke-dasharray="6 4"/><line x1="429.5" y1="0" x2="429.5" y2="61.0" stroke="rgba(255,255,255,.16)" stroke-width="1.2" stroke-dasharray="6 4"/><line x1="477.5" y1="0" x2="477.5" y2="61.0" stroke="rgba(255,255,255,.16)" stroke-width="1.2" stroke-dasharray="6 4"/><line x1="524.5" y1="0" x2="524.5" y2="61.0" stroke="rgba(255,255,255,.16)" stroke-width="1.2" stroke-dasharray="6 4"/></svg>
<div class="a" style="left:78.0px;top:39.7px;width:17.5px;height:9.5px;background:#1b1e29"></div>
<div class="a" style="left:99.0px;top:39.7px;width:20.0px;height:9.5px;background:#1b1e29"></div>
<div class="a" style="left:126.5px;top:39.7px;width:17.1px;height:9.5px;background:#1b1e29"></div>
<div class="a" style="left:144.0px;top:39.7px;width:23.0px;height:9.5px;background:#1b1e29"></div>
<div class="a" style="left:177.0px;top:39.7px;width:17.0px;height:9.5px;background:#1b1e29"></div>
<div class="a" style="left:201.0px;top:39.7px;width:37.0px;height:9.5px;background:#1b1e29"></div>
<div class="a" style="left:245.0px;top:39.7px;width:6.0px;height:9.5px;background:#1b1e29"></div>
<div class="a" style="left:291.0px;top:39.7px;width:22.0px;height:9.5px;background:#1b1e29"></div>
<div class="a" style="left:322.0px;top:39.7px;width:24.0px;height:9.5px;background:#1b1e29"></div>
<div class="a" style="left:358.0px;top:39.7px;width:35.0px;height:9.5px;background:#1b1e29"></div>
<div class="a" style="left:408.6px;top:39.7px;width:20.4px;height:9.5px;background:#1b1e29"></div>
<div class="a" style="left:71.6px;top:59.7px;width:6.4px;height:9.6px;background:#1b1e29"></div>
<div class="a" style="left:96.0px;top:59.7px;width:2.0px;height:9.6px;background:#1b1e29"></div>
<div class="a" style="left:119.5px;top:59.7px;width:7.0px;height:9.6px;background:#1b1e29"></div>
<div class="a" style="left:169.0px;top:59.7px;width:8.0px;height:9.6px;background:#1b1e29"></div>
<div class="a" style="left:194.0px;top:59.7px;width:7.0px;height:9.6px;background:#1b1e29"></div>
<div class="a" style="left:286.0px;top:59.7px;width:5.0px;height:9.6px;background:#1b1e29"></div>
<div class="a" style="left:313.0px;top:59.7px;width:8.5px;height:9.6px;background:#1b1e29"></div>
<div class="a" style="left:346.0px;top:59.7px;width:12.0px;height:9.6px;background:#1b1e29"></div>
<div class="a" style="left:393.5px;top:59.7px;width:14.5px;height:9.6px;background:#1b1e29"></div>
<div class="a" style="left:252.0px;top:89.4px;width:34.0px;height:9.6px;background:#1b1e29"></div>
<div class="a" style="left:429.5px;top:89.4px;width:35.5px;height:9.6px;background:#1b1e29"></div>
</div>
<div class="a" style="left:1168.6px;top:166.0px;width:429.2px;height:99.6px;border-radius:4px;overflow:hidden;background:#007e4f"><div class="a" style="left:0;top:0;width:100%;height:39.0px;background:#00d035;border-bottom:1.5px solid rgba(0,0,0,.55)"></div><div class="t" style="left:5.4px;top:13.0px;font-size:15.95px;color:#111;">Top of the game I'm settin'#1 settin'#2 the tone Queen of</div>
<svg class="a" style="left:0;top:40.0px" width="429.2" height="60.6"><line x1="24.9" y1="0" x2="24.9" y2="60.6" stroke="rgba(255,255,255,.16)" stroke-width="1.2" stroke-dasharray="6 4"/><line x1="71.9" y1="0" x2="71.9" y2="60.6" stroke="rgba(255,255,255,.16)" stroke-width="1.2" stroke-dasharray="6 4"/><line x1="119.9" y1="0" x2="119.9" y2="60.6" stroke="rgba(255,255,255,.16)" stroke-width="1.2" stroke-dasharray="6 4"/><line x1="167.9" y1="0" x2="167.9" y2="60.6" stroke="rgba(255,255,255,.16)" stroke-width="1.2" stroke-dasharray="6 4"/><line x1="214.9" y1="0" x2="214.9" y2="60.6" stroke="rgba(255,255,255,.16)" stroke-width="1.2" stroke-dasharray="6 4"/><line x1="262.9" y1="0" x2="262.9" y2="60.6" stroke="rgba(255,255,255,.16)" stroke-width="1.2" stroke-dasharray="6 4"/><line x1="310.9" y1="0" x2="310.9" y2="60.6" stroke="rgba(255,255,255,.16)" stroke-width="1.2" stroke-dasharray="6 4"/><line x1="357.9" y1="0" x2="357.9" y2="60.6" stroke="rgba(255,255,255,.16)" stroke-width="1.2" stroke-dasharray="6 4"/><line x1="405.9" y1="0" x2="405.9" y2="60.6" stroke="rgba(255,255,255,.16)" stroke-width="1.2" stroke-dasharray="6 4"/></svg>
<div class="a" style="left:24.2px;top:40.0px;width:77.7px;height:9.6px;background:#1b1e29"></div>
<div class="a" style="left:119.4px;top:40.0px;width:71.0px;height:9.6px;background:#1b1e29"></div>
<div class="a" style="left:215.4px;top:40.0px;width:26.6px;height:9.6px;background:#1b1e29"></div>
<div class="a" style="left:266.4px;top:40.0px;width:19.0px;height:9.6px;background:#1b1e29"></div>
<div class="a" style="left:310.1px;top:40.0px;width:71.3px;height:9.6px;background:#1b1e29"></div>
<div class="a" style="left:101.9px;top:50.0px;width:17.8px;height:9.5px;background:#1b1e29"></div>
<div class="a" style="left:191.0px;top:50.0px;width:18.2px;height:9.5px;background:#1b1e29"></div>
<div class="a" style="left:242.0px;top:50.0px;width:24.7px;height:9.5px;background:#1b1e29"></div>
<div class="a" style="left:285.4px;top:50.0px;width:24.0px;height:9.5px;background:#1b1e29"></div>
<div class="a" style="left:381.4px;top:50.0px;width:24.0px;height:9.5px;background:#1b1e29"></div>
</div>
<div class="a" style="left:668.8px;top:275.5px;width:523.9px;height:99.0px;border-radius:4px;overflow:hidden;background:#725c9c"><div class="a" style="left:0;top:0;width:100%;height:38.5px;background:#c49dfa;border-bottom:1.5px solid rgba(0,0,0,.55)"></div><div class="t" style="left:5px;top:12.8px;font-size:15.45px;color:#111;">Rompemos#1 Rompemos#2 Rompemo…#1 mundo#2 a girar#1 girar#2</div>
<svg class="a" style="left:0;top:39.5px" width="523.9" height="60.5"><line x1="47.7" y1="0" x2="47.7" y2="60.5" stroke="rgba(255,255,255,.16)" stroke-width="1.2" stroke-dasharray="6 4"/><line x1="95.7" y1="0" x2="95.7" y2="60.5" stroke="rgba(255,255,255,.16)" stroke-width="1.2" stroke-dasharray="6 4"/><line x1="142.7" y1="0" x2="142.7" y2="60.5" stroke="rgba(255,255,255,.16)" stroke-width="1.2" stroke-dasharray="6 4"/><line x1="190.7" y1="0" x2="190.7" y2="60.5" stroke="rgba(255,255,255,.16)" stroke-width="1.2" stroke-dasharray="6 4"/><line x1="238.7" y1="0" x2="238.7" y2="60.5" stroke="rgba(255,255,255,.16)" stroke-width="1.2" stroke-dasharray="6 4"/><line x1="285.7" y1="0" x2="285.7" y2="60.5" stroke="rgba(255,255,255,.16)" stroke-width="1.2" stroke-dasharray="6 4"/><line x1="333.7" y1="0" x2="333.7" y2="60.5" stroke="rgba(255,255,255,.16)" stroke-width="1.2" stroke-dasharray="6 4"/><line x1="381.7" y1="0" x2="381.7" y2="60.5" stroke="rgba(255,255,255,.16)" stroke-width="1.2" stroke-dasharray="6 4"/><line x1="428.7" y1="0" x2="428.7" y2="60.5" stroke="rgba(255,255,255,.16)" stroke-width="1.2" stroke-dasharray="6 4"/><line x1="476.7" y1="0" x2="476.7" y2="60.5" stroke="rgba(255,255,255,.16)" stroke-width="1.2" stroke-dasharray="6 4"/><line x1="524.7" y1="0" x2="524.7" y2="60.5" stroke="rgba(255,255,255,.16)" stroke-width="1.2" stroke-dasharray="6 4"/></svg>
<div class="a" style="left:77.2px;top:48.1px;width:18.0px;height:7.4px;background:#1b1e29"></div>
<div class="a" style="left:101.2px;top:48.1px;width:18.0px;height:7.4px;background:#1b1e29"></div>
<div class="a" style="left:125.2px;top:48.1px;width:29.0px;height:7.4px;background:#1b1e29"></div>
<div class="a" style="left:172.2px;top:48.1px;width:30.0px;height:7.4px;background:#1b1e29"></div>
<div class="a" style="left:219.9px;top:48.1px;width:18.3px;height:7.4px;background:#1b1e29"></div>
<div class="a" style="left:267.8px;top:48.1px;width:17.4px;height:7.4px;background:#1b1e29"></div>
<div class="a" style="left:292.2px;top:48.1px;width:17.0px;height:7.4px;background:#1b1e29"></div>
<div class="a" style="left:315.2px;top:48.1px;width:30.0px;height:7.4px;background:#1b1e29"></div>
<div class="a" style="left:357.2px;top:48.1px;width:36.0px;height:7.4px;background:#1b1e29"></div>
<div class="a" style="left:405.2px;top:48.1px;width:23.0px;height:7.4px;background:#1b1e29"></div>
<div class="a" style="left:71.2px;top:65.5px;width:6.0px;height:6.6px;background:#1b1e29"></div>
<div class="a" style="left:95.2px;top:65.5px;width:6.0px;height:6.6px;background:#1b1e29"></div>
<div class="a" style="left:118.9px;top:65.5px;width:6.0px;height:6.6px;background:#1b1e29"></div>
<div class="a" style="left:154.9px;top:65.5px;width:17.7px;height:6.6px;background:#1b1e29"></div>
<div class="a" style="left:202.2px;top:65.5px;width:17.7px;height:6.6px;background:#1b1e29"></div>
<div class="a" style="left:262.0px;top:65.5px;width:5.8px;height:6.6px;background:#1b1e29"></div>
<div class="a" style="left:285.9px;top:65.5px;width:6.3px;height:6.6px;background:#1b1e29"></div>
<div class="a" style="left:309.2px;top:65.5px;width:6.0px;height:6.6px;background:#1b1e29"></div>
<div class="a" style="left:345.2px;top:65.5px;width:12.0px;height:6.6px;background:#1b1e29"></div>
<div class="a" style="left:393.0px;top:65.5px;width:12.2px;height:6.6px;background:#1b1e29"></div>
<div class="a" style="left:238.0px;top:90.2px;width:24.0px;height:7.6px;background:#1b1e29"></div>
<div class="a" style="left:429.0px;top:90.2px;width:24.2px;height:7.6px;background:#1b1e29"></div>
</div>
<div class="a" style="left:1526.0px;top:275.3px;width:429.0px;height:99.7px;border-radius:4px;overflow:hidden;background:#725c9c"><div class="a" style="left:0;top:0;width:100%;height:39.1px;background:#c49dfa;border-bottom:1.5px solid rgba(0,0,0,.55)"></div><div class="t" style="left:5.3px;top:13.0px;font-size:15.5px;color:#111;">Somos#1 Somos#2 estrellas#…1 cruzan#2 el mar Luces#1</div>
<svg class="a" style="left:0;top:40.1px" width="429.0" height="60.6"><line x1="0.5" y1="0" x2="0.5" y2="60.6" stroke="rgba(255,255,255,.16)" stroke-width="1.2" stroke-dasharray="6 4"/><line x1="48.5" y1="0" x2="48.5" y2="60.6" stroke="rgba(255,255,255,.16)" stroke-width="1.2" stroke-dasharray="6 4"/><line x1="96.5" y1="0" x2="96.5" y2="60.6" stroke="rgba(255,255,255,.16)" stroke-width="1.2" stroke-dasharray="6 4"/><line x1="143.5" y1="0" x2="143.5" y2="60.6" stroke="rgba(255,255,255,.16)" stroke-width="1.2" stroke-dasharray="6 4"/><line x1="191.5" y1="0" x2="191.5" y2="60.6" stroke="rgba(255,255,255,.16)" stroke-width="1.2" stroke-dasharray="6 4"/><line x1="239.5" y1="0" x2="239.5" y2="60.6" stroke="rgba(255,255,255,.16)" stroke-width="1.2" stroke-dasharray="6 4"/><line x1="286.5" y1="0" x2="286.5" y2="60.6" stroke="rgba(255,255,255,.16)" stroke-width="1.2" stroke-dasharray="6 4"/><line x1="334.5" y1="0" x2="334.5" y2="60.6" stroke="rgba(255,255,255,.16)" stroke-width="1.2" stroke-dasharray="6 4"/><line x1="382.5" y1="0" x2="382.5" y2="60.6" stroke="rgba(255,255,255,.16)" stroke-width="1.2" stroke-dasharray="6 4"/></svg>
<div class="a" style="left:47.6px;top:48.5px;width:16.4px;height:7.4px;background:#1b1e29"></div>
<div class="a" style="left:79.5px;top:48.5px;width:32.2px;height:7.4px;background:#1b1e29"></div>
<div class="a" style="left:64.0px;top:65.7px;width:15.5px;height:6.8px;background:#1b1e29"></div>
<div class="a" style="left:111.7px;top:65.7px;width:47.3px;height:6.8px;background:#1b1e29"></div>
<div class="a" style="left:202.0px;top:65.7px;width:36.0px;height:6.8px;background:#1b1e29"></div>
<div class="a" style="left:254.5px;top:65.7px;width:47.5px;height:6.8px;background:#1b1e29"></div>
<div class="a" style="left:159.0px;top:82.5px;width:43.0px;height:7.4px;background:#1b1e29"></div>
<div class="a" style="left:239.0px;top:82.5px;width:15.0px;height:7.4px;background:#1b1e29"></div>
<div class="a" style="left:302.0px;top:82.5px;width:47.8px;height:7.4px;background:#1b1e29"></div>
<div class="a" style="left:349.8px;top:90.7px;width:71.2px;height:7.5px;background:#1b1e29"></div>
</div>
<div class="a" style="left:1859.8px;top:384.7px;width:300.2px;height:98.8px;border-radius:4px;overflow:hidden;background:#9b5c2e"><div class="a" style="left:0;top:0;width:100%;height:38.3px;background:#ff9a30;border-bottom:1.5px solid rgba(0,0,0,.55)"></div><div class="t" style="left:5px;top:12.7px;font-size:15.9px;color:#111;">Eight o eight hear… thunder#2 in the</div>
<svg class="a" style="left:0;top:39.3px" width="300.2" height="60.5"><line x1="0.7" y1="0" x2="0.7" y2="60.5" stroke="rgba(255,255,255,.16)" stroke-width="1.2" stroke-dasharray="6 4"/><line x1="48.7" y1="0" x2="48.7" y2="60.5" stroke="rgba(255,255,255,.16)" stroke-width="1.2" stroke-dasharray="6 4"/><line x1="95.7" y1="0" x2="95.7" y2="60.5" stroke="rgba(255,255,255,.16)" stroke-width="1.2" stroke-dasharray="6 4"/><line x1="143.7" y1="0" x2="143.7" y2="60.5" stroke="rgba(255,255,255,.16)" stroke-width="1.2" stroke-dasharray="6 4"/><line x1="190.7" y1="0" x2="190.7" y2="60.5" stroke="rgba(255,255,255,.16)" stroke-width="1.2" stroke-dasharray="6 4"/><line x1="238.7" y1="0" x2="238.7" y2="60.5" stroke="rgba(255,255,255,.16)" stroke-width="1.2" stroke-dasharray="6 4"/></svg>
<div class="a" style="left:65.6px;top:59.8px;width:23.6px;height:9.5px;background:#1b1e29"></div>
<div class="a" style="left:95.8px;top:59.8px;width:23.1px;height:9.5px;background:#1b1e29"></div>
<div class="a" style="left:143.2px;top:59.8px;width:23.6px;height:9.5px;background:#1b1e29"></div>
<div class="a" style="left:190.2px;top:59.8px;width:24.0px;height:9.5px;background:#1b1e29"></div>
<div class="a" style="left:238.2px;top:59.8px;width:23.5px;height:9.5px;background:#1b1e29"></div>
<div class="a" style="left:12.2px;top:89.3px;width:53.4px;height:9.5px;background:#1b1e29"></div>
<div class="a" style="left:119.2px;top:89.3px;width:20.0px;height:9.5px;background:#1b1e29"></div>
<div class="a" style="left:166.8px;top:89.3px;width:23.4px;height:9.5px;background:#1b1e29"></div>
<div class="a" style="left:214.2px;top:89.3px;width:23.5px;height:9.5px;background:#1b1e29"></div>
<div class="a" style="left:261.7px;top:89.3px;width:28.5px;height:9.5px;background:#1b1e29"></div>
</div>
<svg class="a" style="left:396px;top:143px" width="22" height="20"><path d="M2 2.5 L20 2.5 L11 18 Z" fill="#3a3aa8" stroke="#fff" stroke-width="1.6" stroke-linejoin="round"/></svg>
<div class="a" style="left:1812px;top:1310px;width:272px;height:26px;border-radius:0 0 14px 14px;background:#1a1b22;border:1px solid #34353e"></div>
<div class="a" style="left:123px;top:558.5px;width:1980.5px;height:766.5px;border-radius:18px;background:#272832;overflow:hidden;box-shadow:0 6px 24px rgba(0,0,0,.45);border:1px solid #30313a">
<div class="a" style="left:-124px;top:-559.5px;width:2144px;height:1386px">
<div class="a" style="left:123px;top:558.5px;width:18.5px;height:54px;background:#00c832"></div>
<div class="a" style="left:123px;top:612.3px;width:1980.5px;height:1px;background:#34353f"></div>
<div class="t" style="left:151px;top:579px;font-size:15px;font-weight:bold;color:#fff;">No chains n…</div>
<div class="t" style="left:305px;top:578px;font-size:16px;color:#f2f2f4;">Auto-Medium</div>
<div class="t" style="left:407px;top:578px;font-size:15.5px;color:#9c9ca4;">Cell/Bar</div>
<svg class="a" style="left:467px;top:581px" width="10" height="10"><path d="M2.5 3.5 L5 6 L7.5 3.5" stroke="#9c9ca4" stroke-width="1.4" fill="none"/></svg>
<div class="a" style="left:493px;top:568px;width:1px;height:38px;background:#33343c"></div>
<div class="t" style="left:533px;top:580px;font-size:14px;color:#f2f2f4;-webkit-text-stroke:0.3px #f2f2f4;">EN</div>
<svg class="a" style="left:558px;top:581px" width="10" height="10"><path d="M2.5 3.5 L5 6 L7.5 3.5" stroke="#9c9ca4" stroke-width="1.4" fill="none"/></svg>
<div class="a" style="left:583px;top:567px;width:40px;height:40px;border-radius:5px;background:#5b5cf5"></div>
<svg class="a" style="left:583px;top:567px" width="40" height="40"><path d="M13.5 10.5 L30 20 L22 22 L17.5 30 Z" fill="#fff" stroke="#fff" stroke-width="1.5" stroke-linejoin="round"/></svg>
<svg class="a" style="left:638px;top:570px" width="30" height="32" viewBox="638 570 30 32">
<path d="M643 592 L657.5 577.5 L662 582 L647.5 596.5 L642 597.5 Z" fill="#8e8e96"/>
<path d="M659 576 L661 574 Q662.5 572.5 664 574 L665.5 575.5 Q667 577 665.5 578.5 L663.5 580.5 Z" fill="#8e8e96"/></svg>
<svg class="a" style="left:686px;top:570px" width="32" height="32" viewBox="686 570 32 32">
<circle cx="695" cy="592.5" r="4.6" stroke="#8e8e96" stroke-width="2.2" fill="none"/>
<circle cx="709" cy="592.5" r="4.6" stroke="#8e8e96" stroke-width="2.2" fill="none"/>
<path d="M697 588.5 L707.5 574.5 M707 588.5 L696.5 574.5" stroke="#8e8e96" stroke-width="2.2"/></svg>
<div class="a" style="left:732.5px;top:568px;width:1px;height:38px;background:#33343c"></div>
<svg class="a" style="left:740px;top:566px" width="250" height="44" viewBox="740 566 250 44">
<rect x="749.3" y="586.7" width="27.7" height="10.3" fill="#55555f"/>
<path d="M750 597.5 Q753 591 757.5 587.8 Q760 587 762.7 592 Q765 593 768 591.5 L777 591" stroke="#8e8e96" stroke-width="2.3" fill="none" stroke-linecap="round"/>
<path d="M764.5 588 L773 578.5 Q775 576.5 776.5 578 Q777.5 579.5 775.5 581.5 L767 590.5 L764 591Z" fill="#8e8e96"/>
<path d="M775.5 600.5 L778 603 L780.5 600.5" stroke="#8e8e96" stroke-width="1.3" fill="none"/>
<rect x="798.9" y="586.7" width="27.6" height="10.3" fill="#55555f"/>
<path d="M799.5 598 Q803 591 807 588 Q810 590 812.9 593.4 L826.5 593.4" stroke="#8e8e96" stroke-width="2.3" fill="none" stroke-linecap="round"/>
<path d="M818 581 L822.5 576 Q824 574.5 825.5 576 Q826.5 577.5 825 579 L820.5 584Z" fill="#8e8e96"/>
<path d="M810.5 583 L817 577.5 L822 583 L815.5 588.5Z" fill="#8e8e96" opacity=".75"/>
<rect x="849" y="586.7" width="26.8" height="10.3" fill="#55555f"/>
<path d="M849.5 598 Q853 591 857 588.5 Q860 590 862.5 592 Q866 591 870 591 L875.8 591" stroke="#8e8e96" stroke-width="2.3" fill="none" stroke-linecap="round"/>
<path d="M861.5 584.5 L870.5 575.5 Q872 574 873.5 575.5 L876.5 578.5 Q878 580 876.5 581.5 L867.5 590.5Z" fill="#8e8e96"/>
<path d="M863.5 585 L866 582.5 L868.5 585 L866 587.5Z" fill="#272832"/>
<path d="M898.6 588.2 Q900 577 903.2 577 Q906 577 907.5 586 Q909 596 911 596 Q913.5 596 914 586 Q915 577 917.5 577 Q919.5 577 920.5 587 Q921.5 596 923 595 Q924.5 594 925.4 587" stroke="#8e8e96" stroke-width="2.3" fill="none" stroke-linecap="round"/>
<path d="M961.5 576.5 L961.5 598 M957.5 580.5 L961.5 576.5 L965.5 580.5 M957.5 594 L961.5 598 L965.5 594" stroke="#5e5e68" stroke-width="2.4" fill="none"/>
<path d="M948.7 587.5 Q952 583 956.9 582.5 Q960 583 963.9 589.5 Q967 591 974.4 586" stroke="#8e8e96" stroke-width="2.3" fill="none" stroke-linecap="round"/>
</svg>
<div class="a" style="left:991.5px;top:568px;width:1px;height:38px;background:#33343c"></div>
<div class="t" style="left:1003px;top:579px;font-size:15px;font-weight:bold;color:#a6a7af;">Duration:</div>
<div class="a" style="left:1081px;top:567px;width:38px;height:40px;border-radius:5px;border:1px solid #33343d"></div>
<div class="t" style="left:1090px;top:579px;font-size:15.5px;font-weight:bold;color:#a6a7af;">×2</div>
<div class="a" style="left:1131px;top:567px;width:39px;height:40px;border-radius:5px;border:1px solid #33343d"></div>
<div class="t" style="left:1140px;top:579px;font-size:15.5px;font-weight:bold;color:#a6a7af;">÷2</div>
<svg class="a" style="left:2066px;top:577px" width="20" height="20"><path d="M3.5 3.5 L16.5 16.5 M16.5 3.5 L3.5 16.5" stroke="#fff" stroke-width="1.6"/></svg>
<div class="a" style="left:123px;top:613px;width:36px;height:58.5px;background:#25262e"></div>
<div class="a" style="left:159px;top:613px;width:67px;height:58.5px;background:#272832;border-left:1px solid #30313a"></div>
<div class="a" style="left:226px;top:613px;width:1877.5px;height:19px;background:#24252c"></div>
<div class="a" style="left:226px;top:632px;width:1877.5px;height:39.5px;background:#1c1b21"></div>
<div class="a" style="left:226px;top:671px;width:1877.5px;height:1px;background:#34343c"></div>
<svg class="a" style="left:133px;top:635px" width="16" height="16" viewBox="0 0 16 16">
<path d="M1 5.5 L4 5.5 L8.5 1.5 L8.5 14.5 L4 10.5 L1 10.5Z" fill="#f0f0f2"/>
<path d="M11 4.5 L13 2.8 M11.5 8 L14.5 8 M11 11.5 L13 13.2" stroke="#f0f0f2" stroke-width="1.4"/></svg>
<div class="t" style="left:192px;top:626px;font-size:13px;color:#a4a4ac;transform:translateX(-50%)">C</div>
<div class="t" style="left:192px;top:644px;font-size:13px;color:#a4a4ac;transform:translateX(-50%)">Major</div>
<svg class="a" style="left:0;top:0" width="2144" height="1386" viewBox="0 0 2144 1386"><line x1="268.5" y1="613" x2="268.5" y2="632" stroke="#55555e" stroke-width="1"/><line x1="268.5" y1="663" x2="268.5" y2="671" stroke="#a0a0a6" stroke-width="1.2"/><line x1="318.5" y1="613" x2="318.5" y2="632" stroke="#55555e" stroke-width="1"/><line x1="318.5" y1="666" x2="318.5" y2="671" stroke="#606068" stroke-width="1"/><line x1="368.5" y1="613" x2="368.5" y2="632" stroke="#55555e" stroke-width="1"/><line x1="368.5" y1="666" x2="368.5" y2="671" stroke="#606068" stroke-width="1"/><line x1="418.5" y1="613" x2="418.5" y2="632" stroke="#55555e" stroke-width="1"/><line x1="418.5" y1="666" x2="418.5" y2="671" stroke="#606068" stroke-width="1"/><line x1="468.5" y1="613" x2="468.5" y2="632" stroke="#55555e" stroke-width="1"/><line x1="468.5" y1="663" x2="468.5" y2="671" stroke="#a0a0a6" stroke-width="1.2"/><line x1="518.5" y1="613" x2="518.5" y2="632" stroke="#55555e" stroke-width="1"/><line x1="518.5" y1="666" x2="518.5" y2="671" stroke="#606068" stroke-width="1"/><line x1="568.5" y1="613" x2="568.5" y2="632" stroke="#55555e" stroke-width="1"/><line x1="568.5" y1="666" x2="568.5" y2="671" stroke="#606068" stroke-width="1"/><line x1="617.5" y1="613" x2="617.5" y2="632" stroke="#55555e" stroke-width="1"/><line x1="617.5" y1="666" x2="617.5" y2="671" stroke="#606068" stroke-width="1"/><line x1="667.5" y1="613" x2="667.5" y2="632" stroke="#55555e" stroke-width="1"/><line x1="667.5" y1="632" x2="667.5" y2="671" stroke="#c8c8cc" stroke-width="1.2"/><line x1="717.5" y1="613" x2="717.5" y2="632" stroke="#55555e" stroke-width="1"/><line x1="717.5" y1="666" x2="717.5" y2="671" stroke="#606068" stroke-width="1"/><line x1="767.5" y1="613" x2="767.5" y2="632" stroke="#55555e" stroke-width="1"/><line x1="767.5" y1="666" x2="767.5" y2="671" stroke="#606068" stroke-width="1"/><line x1="817.5" y1="613" x2="817.5" y2="632" stroke="#55555e" stroke-width="1"/><line x1="817.5" y1="666" x2="817.5" y2="671" stroke="#606068" stroke-width="1"/><line x1="867.5" y1="613" x2="867.5" y2="632" stroke="#55555e" stroke-width="1"/><line x1="867.5" y1="663" x2="867.5" y2="671" stroke="#a0a0a6" stroke-width="1.2"/><line x1="917.5" y1="613" x2="917.5" y2="632" stroke="#55555e" stroke-width="1"/><line x1="917.5" y1="666" x2="917.5" y2="671" stroke="#606068" stroke-width="1"/><line x1="967.5" y1="613" x2="967.5" y2="632" stroke="#55555e" stroke-width="1"/><line x1="967.5" y1="666" x2="967.5" y2="671" stroke="#606068" stroke-width="1"/><line x1="1017.5" y1="613" x2="1017.5" y2="632" stroke="#55555e" stroke-width="1"/><line x1="1017.5" y1="666" x2="1017.5" y2="671" stroke="#606068" stroke-width="1"/><line x1="1067.5" y1="613" x2="1067.5" y2="632" stroke="#55555e" stroke-width="1"/><line x1="1067.5" y1="663" x2="1067.5" y2="671" stroke="#a0a0a6" stroke-width="1.2"/><line x1="1117.5" y1="613" x2="1117.5" y2="632" stroke="#55555e" stroke-width="1"/><line x1="1117.5" y1="666" x2="1117.5" y2="671" stroke="#606068" stroke-width="1"/><line x1="1167.5" y1="613" x2="1167.5" y2="632" stroke="#55555e" stroke-width="1"/><line x1="1167.5" y1="666" x2="1167.5" y2="671" stroke="#606068" stroke-width="1"/><line x1="1217.5" y1="613" x2="1217.5" y2="632" stroke="#55555e" stroke-width="1"/><line x1="1217.5" y1="666" x2="1217.5" y2="671" stroke="#606068" stroke-width="1"/><line x1="1267.5" y1="613" x2="1267.5" y2="632" stroke="#55555e" stroke-width="1"/><line x1="1267.5" y1="663" x2="1267.5" y2="671" stroke="#a0a0a6" stroke-width="1.2"/><line x1="1317.5" y1="613" x2="1317.5" y2="632" stroke="#55555e" stroke-width="1"/><line x1="1317.5" y1="666" x2="1317.5" y2="671" stroke="#606068" stroke-width="1"/><line x1="1367.5" y1="613" x2="1367.5" y2="632" stroke="#55555e" stroke-width="1"/><line x1="1367.5" y1="666" x2="1367.5" y2="671" stroke="#606068" stroke-width="1"/><line x1="1417.5" y1="613" x2="1417.5" y2="632" stroke="#55555e" stroke-width="1"/><line x1="1417.5" y1="666" x2="1417.5" y2="671" stroke="#606068" stroke-width="1"/><line x1="1467.5" y1="613" x2="1467.5" y2="632" stroke="#55555e" stroke-width="1"/><line x1="1467.5" y1="632" x2="1467.5" y2="671" stroke="#c8c8cc" stroke-width="1.2"/><line x1="1517.5" y1="613" x2="1517.5" y2="632" stroke="#55555e" stroke-width="1"/><line x1="1517.5" y1="666" x2="1517.5" y2="671" stroke="#606068" stroke-width="1"/><line x1="1567.5" y1="613" x2="1567.5" y2="632" stroke="#55555e" stroke-width="1"/><line x1="1567.5" y1="666" x2="1567.5" y2="671" stroke="#606068" stroke-width="1"/><line x1="1617.5" y1="613" x2="1617.5" y2="632" stroke="#55555e" stroke-width="1"/><line x1="1617.5" y1="666" x2="1617.5" y2="671" stroke="#606068" stroke-width="1"/><line x1="1667.5" y1="613" x2="1667.5" y2="632" stroke="#55555e" stroke-width="1"/><line x1="1667.5" y1="663" x2="1667.5" y2="671" stroke="#a0a0a6" stroke-width="1.2"/><line x1="1717.5" y1="613" x2="1717.5" y2="632" stroke="#55555e" stroke-width="1"/><line x1="1717.5" y1="666" x2="1717.5" y2="671" stroke="#606068" stroke-width="1"/><line x1="1767.5" y1="613" x2="1767.5" y2="632" stroke="#55555e" stroke-width="1"/><line x1="1767.5" y1="666" x2="1767.5" y2="671" stroke="#606068" stroke-width="1"/><line x1="1817.5" y1="613" x2="1817.5" y2="632" stroke="#55555e" stroke-width="1"/><line x1="1817.5" y1="666" x2="1817.5" y2="671" stroke="#606068" stroke-width="1"/><line x1="1867.5" y1="613" x2="1867.5" y2="632" stroke="#55555e" stroke-width="1"/><line x1="1867.5" y1="663" x2="1867.5" y2="671" stroke="#a0a0a6" stroke-width="1.2"/><line x1="1917.5" y1="613" x2="1917.5" y2="632" stroke="#55555e" stroke-width="1"/><line x1="1917.5" y1="666" x2="1917.5" y2="671" stroke="#606068" stroke-width="1"/><line x1="1967.5" y1="613" x2="1967.5" y2="632" stroke="#55555e" stroke-width="1"/><line x1="1967.5" y1="666" x2="1967.5" y2="671" stroke="#606068" stroke-width="1"/><line x1="2017.5" y1="613" x2="2017.5" y2="632" stroke="#55555e" stroke-width="1"/><line x1="2017.5" y1="666" x2="2017.5" y2="671" stroke="#606068" stroke-width="1"/><line x1="2067.5" y1="613" x2="2067.5" y2="632" stroke="#55555e" stroke-width="1"/><line x1="2067.5" y1="663" x2="2067.5" y2="671" stroke="#a0a0a6" stroke-width="1.2"/></svg>
<div class="t" style="left:272.6px;top:657px;font-size:12.2px;color:#a4a4ac;">8.3</div>
<div class="t" style="left:472.5px;top:657px;font-size:12.2px;color:#a4a4ac;">8.4</div>
<div class="t" style="left:674.5px;top:657px;font-size:12.5px;font-weight:bold;color:#fff;">9</div>
<div class="t" style="left:872.4px;top:657px;font-size:12.2px;color:#a4a4ac;">9.2</div>
<div class="t" style="left:1072.4px;top:657px;font-size:12.2px;color:#a4a4ac;">9.3</div>
<div class="t" style="left:1272.3px;top:657px;font-size:12.2px;color:#a4a4ac;">9.4</div>
<div class="t" style="left:1474.2px;top:657px;font-size:12.5px;font-weight:bold;color:#fff;">10</div>
<div class="t" style="left:1672.2px;top:657px;font-size:12.2px;color:#a4a4ac;">10.2</div>
<div class="t" style="left:1872.1px;top:657px;font-size:12.2px;color:#a4a4ac;">10.3</div>
<div class="t" style="left:2072.1px;top:657px;font-size:12.2px;color:#a4a4ac;">10.4</div>
<div class="a" style="left:123px;top:672px;width:1980.5px;height:592.3px;background:#1f1e25"></div>
<div class="a" style="left:123px;top:672px;width:36px;height:592.3px;background:#1d1d23"></div>
<svg class="a" style="left:0;top:0" width="2144" height="1386" viewBox="0 0 2144 1386"><rect x="226" y="1211.2" width="1877.5" height="39.4" fill="#1c1b21"/><rect x="226" y="1093.0" width="1877.5" height="39.4" fill="#1c1b21"/><rect x="226" y="1014.2" width="1877.5" height="39.4" fill="#1c1b21"/><rect x="226" y="935.4" width="1877.5" height="39.4" fill="#1c1b21"/><rect x="226" y="817.2" width="1877.5" height="39.4" fill="#1c1b21"/><rect x="226" y="738.4" width="1877.5" height="39.4" fill="#1c1b21"/><line x1="268.5" y1="672" x2="268.5" y2="1264.3" stroke="#56565e" stroke-width="1.2" stroke-dasharray="5 4"/><line x1="318.5" y1="672" x2="318.5" y2="1264.3" stroke="#34343b" stroke-width="1.2" stroke-dasharray="5 4"/><line x1="368.5" y1="672" x2="368.5" y2="1264.3" stroke="#85858c" stroke-width="1.2" stroke-dasharray="5 4"/><line x1="418.5" y1="672" x2="418.5" y2="1264.3" stroke="#34343b" stroke-width="1.2" stroke-dasharray="5 4"/><line x1="468.5" y1="672" x2="468.5" y2="1264.3" stroke="#56565e" stroke-width="1.2" stroke-dasharray="5 4"/><line x1="518.5" y1="672" x2="518.5" y2="1264.3" stroke="#34343b" stroke-width="1.2" stroke-dasharray="5 4"/><line x1="568.5" y1="672" x2="568.5" y2="1264.3" stroke="#34343b" stroke-width="1.2" stroke-dasharray="5 4"/><line x1="617.5" y1="672" x2="617.5" y2="1264.3" stroke="#34343b" stroke-width="1.2" stroke-dasharray="5 4"/><line x1="667.5" y1="672" x2="667.5" y2="1264.3" stroke="#56565e" stroke-width="1.2" stroke-dasharray="5 4"/><line x1="717.5" y1="672" x2="717.5" y2="1264.3" stroke="#34343b" stroke-width="1.2" stroke-dasharray="5 4"/><line x1="767.5" y1="672" x2="767.5" y2="1264.3" stroke="#34343b" stroke-width="1.2" stroke-dasharray="5 4"/><line x1="817.5" y1="672" x2="817.5" y2="1264.3" stroke="#34343b" stroke-width="1.2" stroke-dasharray="5 4"/><line x1="867.5" y1="672" x2="867.5" y2="1264.3" stroke="#56565e" stroke-width="1.2" stroke-dasharray="5 4"/><line x1="917.5" y1="672" x2="917.5" y2="1264.3" stroke="#34343b" stroke-width="1.2" stroke-dasharray="5 4"/><line x1="967.5" y1="672" x2="967.5" y2="1264.3" stroke="#34343b" stroke-width="1.2" stroke-dasharray="5 4"/><line x1="1017.5" y1="672" x2="1017.5" y2="1264.3" stroke="#34343b" stroke-width="1.2" stroke-dasharray="5 4"/><line x1="1067.5" y1="672" x2="1067.5" y2="1264.3" stroke="#56565e" stroke-width="1.2" stroke-dasharray="5 4"/><line x1="1117.5" y1="672" x2="1117.5" y2="1264.3" stroke="#34343b" stroke-width="1.2" stroke-dasharray="5 4"/><line x1="1167.5" y1="672" x2="1167.5" y2="1264.3" stroke="#85858c" stroke-width="1.2" stroke-dasharray="5 4"/><line x1="1217.5" y1="672" x2="1217.5" y2="1264.3" stroke="#34343b" stroke-width="1.2" stroke-dasharray="5 4"/><line x1="1267.5" y1="672" x2="1267.5" y2="1264.3" stroke="#56565e" stroke-width="1.2" stroke-dasharray="5 4"/><line x1="1317.5" y1="672" x2="1317.5" y2="1264.3" stroke="#34343b" stroke-width="1.2" stroke-dasharray="5 4"/><line x1="1367.5" y1="672" x2="1367.5" y2="1264.3" stroke="#34343b" stroke-width="1.2" stroke-dasharray="5 4"/><line x1="1417.5" y1="672" x2="1417.5" y2="1264.3" stroke="#34343b" stroke-width="1.2" stroke-dasharray="5 4"/><line x1="1467.5" y1="672" x2="1467.5" y2="1264.3" stroke="#56565e" stroke-width="1.2" stroke-dasharray="5 4"/><line x1="1517.5" y1="672" x2="1517.5" y2="1264.3" stroke="#34343b" stroke-width="1.2" stroke-dasharray="5 4"/><line x1="1567.5" y1="672" x2="1567.5" y2="1264.3" stroke="#34343b" stroke-width="1.2" stroke-dasharray="5 4"/><line x1="1617.5" y1="672" x2="1617.5" y2="1264.3" stroke="#34343b" stroke-width="1.2" stroke-dasharray="5 4"/><line x1="1667.5" y1="672" x2="1667.5" y2="1264.3" stroke="#56565e" stroke-width="1.2" stroke-dasharray="5 4"/><line x1="1717.5" y1="672" x2="1717.5" y2="1264.3" stroke="#34343b" stroke-width="1.2" stroke-dasharray="5 4"/><line x1="1767.5" y1="672" x2="1767.5" y2="1264.3" stroke="#34343b" stroke-width="1.2" stroke-dasharray="5 4"/><line x1="1817.5" y1="672" x2="1817.5" y2="1264.3" stroke="#34343b" stroke-width="1.2" stroke-dasharray="5 4"/><line x1="1867.5" y1="672" x2="1867.5" y2="1264.3" stroke="#56565e" stroke-width="1.2" stroke-dasharray="5 4"/><line x1="1917.5" y1="672" x2="1917.5" y2="1264.3" stroke="#34343b" stroke-width="1.2" stroke-dasharray="5 4"/><line x1="1967.5" y1="672" x2="1967.5" y2="1264.3" stroke="#85858c" stroke-width="1.2" stroke-dasharray="5 4"/><line x1="2017.5" y1="672" x2="2017.5" y2="1264.3" stroke="#34343b" stroke-width="1.2" stroke-dasharray="5 4"/><line x1="2067.5" y1="672" x2="2067.5" y2="1264.3" stroke="#56565e" stroke-width="1.2" stroke-dasharray="5 4"/></svg>
<div class="a" style="left:226px;top:672px;width:24px;height:592.3px;background:linear-gradient(90deg,rgba(0,0,0,.25),rgba(0,0,0,0))"></div>
<svg class="a" style="left:0;top:0" width="2144" height="1386" viewBox="0 0 2144 1386"><rect x="158.7" y="672" width="67.5" height="592.3" fill="#fdfdfd"/><rect x="158.7" y="691.8" width="67.5" height="3.2" fill="#111"/><rect x="158.7" y="759.3" width="67.5" height="3.2" fill="#111"/><rect x="158.7" y="826.9" width="67.5" height="3.2" fill="#111"/><rect x="158.7" y="894.4" width="67.5" height="3.2" fill="#111"/><rect x="158.7" y="961.9" width="67.5" height="3.2" fill="#111"/><rect x="158.7" y="1029.5" width="67.5" height="3.2" fill="#111"/><rect x="158.7" y="1097.0" width="67.5" height="3.2" fill="#111"/><rect x="158.7" y="1164.6" width="67.5" height="3.2" fill="#111"/><rect x="158.7" y="1232.1" width="67.5" height="3.2" fill="#111"/><path d="M158.7 1211.2 L192 1211.2 Q194.5 1211.2 194.5 1213.7 L194.5 1248.1 Q194.5 1250.6 192 1250.6 L158.7 1250.6Z" fill="#1d1c21"/><path d="M158.7 1093.0 L192 1093.0 Q194.5 1093.0 194.5 1095.5 L194.5 1129.9 Q194.5 1132.4 192 1132.4 L158.7 1132.4Z" fill="#1d1c21"/><path d="M158.7 1014.2 L192 1014.2 Q194.5 1014.2 194.5 1016.7 L194.5 1051.1 Q194.5 1053.6 192 1053.6 L158.7 1053.6Z" fill="#1d1c21"/><path d="M158.7 935.4 L192 935.4 Q194.5 935.4 194.5 937.9 L194.5 972.3 Q194.5 974.8 192 974.8 L158.7 974.8Z" fill="#1d1c21"/><path d="M158.7 817.2 L192 817.2 Q194.5 817.2 194.5 819.7 L194.5 854.1 Q194.5 856.6 192 856.6 L158.7 856.6Z" fill="#1d1c21"/><path d="M158.7 738.4 L192 738.4 Q194.5 738.4 194.5 740.9 L194.5 775.3 Q194.5 777.8 192 777.8 L158.7 777.8Z" fill="#1d1c21"/><rect x="123" y="895.5" width="36" height="1.2" fill="#4a4a52"/></svg>
<div class="t" style="left:131px;top:877px;font-size:16px;color:#f4f4f6;">C4</div>
<div class="a" style="left:393.0px;top:777.8px;width:74.4px;height:39.4px;background:#00d13a;box-shadow:inset 0 0 0 1px rgba(0,50,20,.45)"></div>
<div class="t" style="left:399.0px;top:790.3px;font-size:16px;color:#0b140c;">-</div>
<div class="a" style="left:480.0px;top:777.8px;width:87.3px;height:39.4px;background:#00d13a;box-shadow:inset 0 0 0 1px rgba(0,50,20,.45)"></div>
<div class="t" style="left:486.0px;top:790.3px;font-size:16px;color:#0b140c;">-</div>
<div class="a" style="left:596.8px;top:777.8px;width:68.8px;height:39.4px;background:#00d13a;box-shadow:inset 0 0 0 1px rgba(0,50,20,.45)"></div>
<div class="t" style="left:602.8px;top:790.3px;font-size:16px;color:#0b140c;">-</div>
<div class="a" style="left:666.6px;top:777.8px;width:100.5px;height:39.4px;background:#00d13a;box-shadow:inset 0 0 0 1px rgba(0,50,20,.45)"></div>
<div class="t" style="left:672.6px;top:790.3px;font-size:16px;color:#0b140c;">locks</div>
<div class="a" style="left:808.3px;top:777.8px;width:70.7px;height:39.4px;background:#00d13a;box-shadow:inset 0 0 0 1px rgba(0,50,20,.45)"></div>
<div class="t" style="left:814.3px;top:790.3px;font-size:16px;color:#0b140c;">-</div>
<div class="a" style="left:908.5px;top:777.8px;width:84.1px;height:39.4px;background:#00d13a;box-shadow:inset 0 0 0 1px rgba(0,50,20,.45)"></div>
<div class="t" style="left:914.5px;top:790.3px;font-size:16px;color:#0b140c;">-</div>
<div class="a" style="left:993.6px;top:777.8px;width:73.4px;height:39.4px;background:#00d13a;box-shadow:inset 0 0 0 1px rgba(0,50,20,.45)"></div>
<div class="t" style="left:999.6px;top:790.3px;font-size:16px;color:#0b140c;">to</div>
<div class="a" style="left:1094.7px;top:777.8px;width:27.0px;height:39.4px;background:#00d13a;box-shadow:inset 0 0 0 1px rgba(0,50,20,.45)"></div>
<div class="t" style="left:1100.7px;top:790.3px;font-size:16px;color:#0b140c;">…</div>
<div class="a" style="left:1286.0px;top:777.8px;width:92.0px;height:39.4px;background:#00d13a;box-shadow:inset 0 0 0 1px rgba(0,50,20,.45)"></div>
<div class="t" style="left:1292.0px;top:790.3px;font-size:16px;color:#0b140c;">-</div>
<div class="a" style="left:1414.4px;top:777.8px;width:52.3px;height:39.4px;background:#00d13a;box-shadow:inset 0 0 0 1px rgba(0,50,20,.45)"></div>
<div class="t" style="left:1420.4px;top:790.3px;font-size:16px;color:#0b140c;">-</div>
<div class="a" style="left:1467.7px;top:777.8px;width:50.4px;height:39.4px;background:#00d13a;box-shadow:inset 0 0 0 1px rgba(0,50,20,.45)"></div>
<div class="t" style="left:1473.7px;top:790.3px;font-size:16px;color:#0b140c;">mo…</div>
<div class="a" style="left:1566.7px;top:777.8px;width:99.3px;height:39.4px;background:#00d13a;box-shadow:inset 0 0 0 1px rgba(0,50,20,.45)"></div>
<div class="t" style="left:1572.7px;top:790.3px;font-size:16px;color:#0b140c;">I'm</div>
<div class="a" style="left:1667.0px;top:777.8px;width:49.3px;height:39.4px;background:#00d13a;box-shadow:inset 0 0 0 1px rgba(0,50,20,.45)"></div>
<div class="t" style="left:1673.0px;top:790.3px;font-size:16px;color:#0b140c;">taki…</div>
<div class="a" style="left:1779.4px;top:777.8px;width:87.1px;height:39.4px;background:#00d13a;box-shadow:inset 0 0 0 1px rgba(0,50,20,.45)"></div>
<div class="t" style="left:1785.4px;top:790.3px;font-size:16px;color:#0b140c;">-</div>
<div class="a" style="left:365.9px;top:856.6px;width:27.1px;height:39.4px;background:#00d13a;box-shadow:inset 0 0 0 1px rgba(0,50,20,.45)"></div>
<div class="t" style="left:371.9px;top:869.1px;font-size:16px;color:#0b140c;">No</div>
<div class="a" style="left:467.4px;top:856.6px;width:12.6px;height:39.4px;background:#00d13a;box-shadow:inset 0 0 0 1px rgba(0,50,20,.45)"></div>
<div class="a" style="left:568.9px;top:856.6px;width:27.9px;height:39.4px;background:#00d13a;box-shadow:inset 0 0 0 1px rgba(0,50,20,.45)"></div>
<div class="t" style="left:574.9px;top:869.1px;font-size:16px;color:#0b140c;">no</div>
<div class="a" style="left:776.6px;top:856.6px;width:31.7px;height:39.4px;background:#00d13a;box-shadow:inset 0 0 0 1px rgba(0,50,20,.45)"></div>
<div class="t" style="left:782.6px;top:869.1px;font-size:16px;color:#0b140c;">no</div>
<div class="a" style="left:879.0px;top:856.6px;width:29.5px;height:39.4px;background:#00d13a;box-shadow:inset 0 0 0 1px rgba(0,50,20,.45)"></div>
<div class="t" style="left:885.0px;top:869.1px;font-size:16px;color:#0b140c;">…</div>
<div class="a" style="left:1266.3px;top:856.6px;width:19.7px;height:39.4px;background:#00d13a;box-shadow:inset 0 0 0 1px rgba(0,50,20,.45)"></div>
<div class="a" style="left:1378.0px;top:856.6px;width:36.4px;height:39.4px;background:#00d13a;box-shadow:inset 0 0 0 1px rgba(0,50,20,.45)"></div>
<div class="t" style="left:1384.0px;top:869.1px;font-size:16px;color:#0b140c;">ain't</div>
<div class="a" style="left:1518.0px;top:856.6px;width:48.7px;height:39.4px;background:#00d13a;box-shadow:inset 0 0 0 1px rgba(0,50,20,.45)"></div>
<div class="t" style="left:1524.0px;top:869.1px;font-size:16px;color:#0b140c;">mo…</div>
<div class="a" style="left:1716.3px;top:856.6px;width:50.1px;height:39.4px;background:#00d13a;box-shadow:inset 0 0 0 1px rgba(0,50,20,.45)"></div>
<div class="t" style="left:1722.3px;top:869.1px;font-size:16px;color:#0b140c;">taki…</div>
<div class="a" style="left:1767.4px;top:856.6px;width:12.0px;height:39.4px;background:#00d13a;box-shadow:inset 0 0 0 1px rgba(0,50,20,.45)"></div>
<div class="a" style="left:1121.7px;top:974.8px;width:144.6px;height:39.4px;background:#00d13a;box-shadow:inset 0 0 0 1px rgba(0,50,20,.45)"></div>
<div class="t" style="left:1127.7px;top:987.3px;font-size:16px;color:#0b140c;">-</div>
<div class="a" style="left:1866.5px;top:974.8px;width:150.2px;height:39.4px;background:#00d13a;box-shadow:inset 0 0 0 1px rgba(0,50,20,.45)"></div>
<div class="t" style="left:1872.5px;top:987.3px;font-size:16px;color:#0b140c;">time</div>
<div class="a" style="left:665.5px;top:777.8px;width:1.3px;height:39.4px;background:#0c2a14"></div>
<div class="a" style="left:992.5px;top:777.8px;width:1.3px;height:39.4px;background:#0c2a14"></div>
<div class="a" style="left:1466.6px;top:777.8px;width:1.3px;height:39.4px;background:#0c2a14"></div>
<div class="a" style="left:1665.9px;top:777.8px;width:1.3px;height:39.4px;background:#0c2a14"></div>
<div class="a" style="left:1766.3px;top:856.6px;width:1.3px;height:39.4px;background:#0c2a14"></div>
<div class="t" style="left:668.0px;top:755.8px;font-size:17px;color:#a9a9b0;">[l][aa][k][s]</div>
<div class="t" style="left:993.0px;top:755.8px;font-size:17px;color:#a9a9b0;">[t][uw]</div>
<div class="t" style="left:1096.0px;top:755.8px;font-size:17px;color:#a9a9b0;">[…</div>
<div class="t" style="left:1468.0px;top:755.8px;font-size:17px;color:#a9a9b0;">[m][…</div>
<div class="t" style="left:1567.0px;top:755.8px;font-size:17px;color:#a9a9b0;">[ay][m]</div>
<div class="t" style="left:1667.0px;top:755.8px;font-size:17px;color:#a9a9b0;">[t][ey]</div>
<div class="t" style="left:367.0px;top:834.6px;font-size:17px;color:#a9a9b0;">[…</div>
<div class="t" style="left:569.0px;top:834.6px;font-size:17px;color:#a9a9b0;">[…</div>
<div class="t" style="left:777.0px;top:834.6px;font-size:17px;color:#a9a9b0;">[n…</div>
<div class="t" style="left:880.0px;top:834.6px;font-size:17px;color:#a9a9b0;">[…</div>
<div class="t" style="left:1379.0px;top:834.6px;font-size:17px;color:#a9a9b0;">* […</div>
<div class="t" style="left:1519.0px;top:834.6px;font-size:17px;color:#a9a9b0;">[n][iy]</div>
<div class="t" style="left:1717.0px;top:834.6px;font-size:17px;color:#a9a9b0;">[k][i…</div>
<div class="t" style="left:1867.0px;top:952.8px;font-size:17px;color:#a9a9b0;">[t][ay][m]</div>
<div class="a" style="left:1991px;top:795.5px;width:75px;height:4px;background:#5d5590"></div>
<div class="a" style="left:2092px;top:795.5px;width:12px;height:4px;background:#5d5590"></div>
<div class="a" style="left:1966px;top:874.3px;width:25px;height:4px;background:#5d5590"></div>
<div class="a" style="left:2066px;top:874.3px;width:25px;height:4px;background:#5d5590"></div>
<div class="t" style="left:378px;top:1047px;font-size:21.1px;color:#a3a3aa;">No chains no locks no walls to climb Time ain't money I'm takin' my time</div>
<div class="a" style="left:567.3px;top:665px;width:1.4px;height:599.5px;background:#b4b4f0"></div>
<svg class="a" style="left:557px;top:655px" width="22" height="20"><path d="M2 2.5 L20 2.5 L11 17 Z" fill="#3a3aa8" stroke="#fff" stroke-width="1.6" stroke-linejoin="round"/></svg>
<div class="a" style="left:226px;top:1249px;width:1877.5px;height:15px;background:rgba(255,255,255,.035)"></div>
<div class="a" style="left:404px;top:1251px;width:9px;height:9px;border-radius:50%;background:rgba(255,255,255,.1)"></div>
<div class="a" style="left:418px;top:1251px;width:1522px;height:9px;border-radius:5px;background:rgba(255,255,255,.07)"></div>
<div class="a" style="left:1945px;top:1251px;width:9px;height:9px;border-radius:50%;background:rgba(255,255,255,.1)"></div>
<div class="a" style="left:2089.5px;top:941px;width:10px;height:10px;border-radius:50%;background:#2c2c34"></div>
<div class="a" style="left:2089.7px;top:956px;width:9.6px;height:64px;border-radius:5px;background:#34343c"></div>
<div class="a" style="left:2089.5px;top:1023px;width:10px;height:10px;border-radius:50%;background:#2c2c34"></div>
<svg class="a" style="left:0;top:0;mix-blend-mode:screen" width="2144" height="1386" viewBox="0 0 2144 1386"><path d="M346.0 1264.0 C346.1 1250.0 346.3 1203.7 346.5 1180.0 C346.7 1156.3 346.8 1143.2 347.2 1122.0 C347.6 1100.8 347.7 1067.0 349.0 1053.0 C350.3 1039.0 352.9 1045.6 354.8 1038.0 C356.7 1030.4 358.7 1021.5 360.6 1007.5 C362.5 993.5 365.0 970.6 366.3 954.0 C367.6 937.4 366.9 918.8 368.2 908.0 C369.5 897.2 371.4 894.7 374.0 889.0 C376.6 883.3 380.7 880.0 383.5 873.7 C386.3 867.4 389.1 862.1 391.0 851.0 C392.9 839.9 393.4 816.2 395.0 806.9 C396.6 797.6 398.2 796.4 400.7 795.4 C403.2 794.4 406.5 799.7 410.0 801.0 C413.5 802.3 416.6 802.3 421.7 803.0 C426.8 803.7 436.7 803.4 440.8 805.0 C444.9 806.6 444.6 805.6 446.5 812.6 C448.4 819.6 450.4 832.4 452.3 847.0 C454.2 861.6 456.1 888.1 458.0 900.5 C459.9 912.9 462.1 919.0 463.7 921.5 C465.3 924.0 466.3 921.2 467.6 915.8 C468.9 910.4 470.1 894.7 471.4 889.0 C472.7 883.3 473.8 880.8 475.2 881.4 C476.6 882.0 478.5 895.4 479.8 892.8 C481.1 890.2 481.7 878.7 482.8 866.0 C483.9 853.3 485.1 828.2 486.7 816.4 C488.3 804.6 489.8 798.6 492.4 795.4 C494.9 792.2 497.2 796.7 502.0 797.3 C506.8 797.9 515.3 799.2 521.0 799.2 C526.7 799.2 531.8 797.0 536.3 797.3 C540.8 797.6 545.2 798.5 547.8 801.1 C550.3 803.7 550.0 805.6 551.6 812.6 C553.2 819.6 555.8 833.6 557.4 843.2 C559.0 852.8 559.6 863.0 561.2 870.0 C562.8 877.0 565.1 884.9 567.0 885.2 C568.9 885.5 570.7 875.0 572.6 871.8 C574.5 868.6 576.5 864.4 578.4 866.0 C580.3 867.6 582.2 876.9 584.1 881.4 C586.0 885.9 588.2 897.3 589.8 892.8 C591.4 888.3 592.4 869.9 593.7 854.6 C595.0 839.3 595.6 811.5 597.5 801.0 C599.4 790.5 603.1 792.5 605.0 791.6 C606.9 790.7 607.6 794.5 609.0 795.4 C610.4 796.2 609.4 796.5 613.3 796.7 C617.2 796.9 623.8 797.0 632.3 796.7 C640.8 796.4 653.4 795.4 664.0 795.1 C674.6 794.8 688.3 794.0 695.7 795.1 C703.1 796.2 705.2 798.3 708.4 801.5 C711.6 804.7 713.2 804.7 714.8 814.2 C716.4 823.7 717.2 834.3 718.0 858.6 C718.8 882.9 719.0 919.8 719.3 960.0 C719.5 1000.2 719.5 1049.3 719.5 1100.0 C719.5 1150.7 719.5 1236.7 719.5 1264.0" stroke="#7c7c82" stroke-width="1.4" fill="none" stroke-linejoin="round"/><path d="M761.7 944.0 C762.1 929.2 762.8 868.1 764.0 855.4 C765.2 842.7 767.1 864.3 768.7 868.0 C770.3 871.7 772.1 876.8 773.4 877.6 C774.7 878.4 775.3 873.2 776.6 872.9 C777.9 872.6 779.0 875.8 781.4 876.0 C783.8 876.2 788.6 875.7 791.0 874.4 C793.4 873.1 794.0 873.8 795.6 868.0 C797.2 862.2 798.5 849.5 800.4 839.5 C802.2 829.5 804.6 814.1 806.7 807.8 C808.8 801.5 810.4 802.5 813.0 801.5 C815.6 800.5 818.4 801.8 822.6 801.5 C826.9 801.2 833.8 800.0 838.5 800.0 C843.2 800.0 847.8 800.2 851.0 801.5 C854.2 802.8 855.4 800.9 857.5 807.8 C859.6 814.7 861.2 832.1 863.8 842.7 C866.4 853.3 869.6 865.2 873.3 871.3 C877.0 877.4 882.2 877.6 886.0 879.2 C889.8 880.8 892.7 884.8 895.9 880.8 C899.1 876.8 902.8 865.4 905.4 855.4 C908.0 845.4 909.9 829.0 911.7 820.5 C913.6 812.0 913.9 807.9 916.5 804.7 C919.1 801.5 922.1 802.3 927.6 801.5 C933.1 800.7 945.6 800.5 949.8 800.0 C954.0 799.5 948.8 798.0 953.0 798.3 C957.2 798.5 966.0 801.2 975.0 801.5 C984.0 801.8 996.3 800.5 1006.9 800.0 C1017.5 799.5 1030.1 798.6 1038.6 798.3 C1047.0 798.0 1052.9 797.8 1057.6 798.3 C1062.3 798.8 1065.4 801.0 1067.0 801.5" stroke="#7c7c82" stroke-width="1.4" fill="none" stroke-linejoin="round"/><path d="M1095.7 777.7 C1096.8 782.2 1099.9 801.3 1102.0 804.7 C1104.1 808.1 1106.6 801.5 1108.4 798.3 C1110.2 795.1 1111.7 783.5 1113.0 785.6 C1114.3 787.7 1115.2 793.5 1116.3 811.0 C1117.4 828.5 1118.1 862.3 1119.4 890.3 C1120.7 918.3 1122.9 955.2 1124.2 979.0 C1125.5 1002.8 1125.8 1026.6 1127.4 1033.0 C1129.0 1039.4 1131.1 1024.1 1133.7 1017.2 C1136.3 1010.3 1140.0 995.0 1143.2 991.8 C1146.4 988.6 1149.1 997.0 1152.8 998.1 C1156.5 999.2 1160.1 998.4 1165.4 998.1 C1170.7 997.8 1179.2 996.5 1184.5 996.5 C1189.8 996.5 1189.8 998.1 1197.2 998.1 C1204.6 998.1 1222.0 996.5 1228.9 996.5 C1235.8 996.5 1235.2 995.7 1238.4 998.1 C1241.6 1000.5 1245.2 1002.3 1247.9 1010.8 C1250.6 1019.3 1252.7 1034.0 1254.3 1048.9 C1255.9 1063.8 1256.8 1088.8 1257.4 1100.0 C1258.0 1111.2 1257.9 1113.3 1258.0 1116.0" stroke="#7c7c82" stroke-width="1.4" fill="none" stroke-linejoin="round"/><path d="M1264.0 1245.0 C1264.0 1229.2 1264.2 1174.2 1264.3 1150.0 C1264.4 1125.8 1264.3 1127.4 1264.5 1100.0 C1264.7 1072.6 1264.6 1019.3 1265.3 985.4 C1266.0 951.5 1267.2 913.5 1268.5 896.6 C1269.8 879.7 1271.7 884.0 1273.3 884.0 C1274.9 884.0 1276.7 898.7 1278.0 896.6 C1279.3 894.5 1280.1 886.1 1281.2 871.3 C1282.3 856.5 1283.1 820.5 1284.4 807.8 C1285.7 795.1 1286.7 797.1 1289.1 795.0 C1291.5 792.9 1295.9 794.5 1298.6 795.0 C1301.2 795.5 1301.3 798.8 1305.0 798.3 C1308.7 797.8 1316.6 792.5 1320.8 792.0 C1325.0 791.5 1327.2 793.7 1330.4 795.0 C1333.6 796.3 1336.2 799.2 1339.9 800.0 C1343.6 800.8 1349.7 798.7 1352.6 800.0 C1355.5 801.3 1355.2 800.7 1357.3 807.8 C1359.4 814.9 1362.3 831.1 1365.2 842.7 C1368.1 854.3 1372.2 871.2 1374.8 877.6 C1377.4 884.0 1378.5 880.0 1381.1 880.8 C1383.7 881.6 1387.4 882.9 1390.6 882.4 C1393.8 881.9 1397.4 881.0 1400.1 877.6 C1402.8 874.2 1404.4 872.3 1406.5 861.7 C1408.6 851.1 1410.7 824.8 1412.8 814.2 C1414.9 803.6 1416.5 800.9 1419.2 798.3 C1421.9 795.6 1425.5 797.2 1428.7 798.3 C1431.9 799.4 1434.5 803.1 1438.2 804.7 C1441.9 806.3 1446.7 807.8 1450.9 807.8 C1455.1 807.8 1460.4 809.5 1463.6 804.7 C1466.8 800.0 1467.8 783.5 1469.9 779.3 C1472.0 775.1 1474.2 777.2 1476.3 779.3 C1478.4 781.4 1478.9 788.5 1482.6 792.0 C1486.3 795.5 1495.1 797.4 1498.5 800.0 C1501.9 802.6 1501.1 798.0 1503.2 807.8 C1505.3 817.6 1508.7 848.5 1511.1 858.6 C1513.5 868.7 1514.3 864.9 1517.5 868.1 C1520.7 871.3 1524.6 875.3 1530.2 877.6 C1535.8 879.9 1546.0 883.3 1551.0 881.7 C1556.0 880.1 1557.7 876.0 1560.0 868.2 C1562.3 860.5 1562.6 847.7 1564.6 835.2 C1566.6 822.7 1569.3 799.6 1572.1 793.1 C1574.8 786.6 1578.1 795.1 1581.1 796.1 C1584.1 797.1 1586.1 798.9 1590.1 799.1 C1594.1 799.4 1601.1 797.9 1605.1 797.6 C1609.1 797.4 1610.6 795.9 1614.1 797.6 C1617.6 799.4 1623.2 804.3 1626.2 808.1 C1629.2 811.9 1630.7 813.2 1632.2 820.2 C1633.7 827.2 1634.5 826.9 1635.2 850.2 C1635.9 873.5 1636.2 891.0 1636.5 960.0 C1636.8 1029.0 1636.7 1213.3 1636.7 1264.0" stroke="#7c7c82" stroke-width="1.4" fill="none" stroke-linejoin="round"/><path d="M1713.9 1264.0 C1714.0 1236.7 1714.1 1160.7 1714.2 1100.0 C1714.3 1039.3 1714.5 939.1 1714.6 900.0 C1714.7 860.9 1714.0 870.5 1714.8 865.2 C1715.6 859.9 1717.0 866.7 1719.3 868.2 C1721.5 869.7 1724.8 872.7 1728.3 874.2 C1731.8 875.7 1735.3 876.7 1740.3 877.2 C1745.3 877.7 1754.3 878.2 1758.3 877.2 C1762.3 876.2 1762.3 872.2 1764.3 871.2 C1766.3 870.2 1768.3 869.2 1770.3 871.2 C1772.3 873.2 1774.9 886.7 1776.4 883.2 C1777.9 879.7 1778.4 863.2 1779.4 850.2 C1780.4 837.2 1781.2 815.1 1782.4 805.1 C1783.7 795.1 1785.4 792.1 1786.9 790.1 C1788.4 788.1 1789.7 790.9 1791.4 793.1 C1793.2 795.4 1794.9 802.1 1797.4 803.6 C1799.9 805.1 1802.9 803.4 1806.4 802.1 C1809.9 800.9 1816.4 797.1 1818.4 796.1" stroke="#7c7c82" stroke-width="1.4" fill="none" stroke-linejoin="round"/><path d="M1865.0 1264.0 C1865.0 1245.0 1865.1 1177.3 1865.2 1150.0 C1865.3 1122.7 1865.0 1140.0 1865.5 1100.0 C1866.0 1060.0 1866.6 945.7 1868.0 910.3 C1869.4 874.9 1872.0 888.7 1874.0 887.7 C1876.0 886.7 1877.8 893.0 1880.0 904.3 C1882.2 915.6 1885.2 941.3 1887.5 955.3 C1889.8 969.3 1891.5 980.1 1893.5 988.4 C1895.5 996.7 1897.0 1003.5 1899.5 1005.0 C1902.0 1006.5 1905.0 999.7 1908.5 997.4 C1912.0 995.1 1914.5 992.4 1920.5 991.4 C1926.5 990.4 1939.6 990.4 1944.6 991.4 C1949.6 992.4 1946.6 996.4 1950.6 997.4 C1954.6 998.4 1963.6 997.6 1968.6 997.4 C1973.6 997.1 1976.6 994.9 1980.6 995.9 C1984.6 996.9 1988.6 1001.1 1992.6 1003.4 C1996.6 1005.6 2002.2 1006.4 2004.7 1009.4 C2007.2 1012.4 2006.2 1018.4 2007.7 1021.4 C2009.2 1024.4 2011.7 1027.4 2013.7 1027.4 C2015.7 1027.4 2018.7 1022.4 2019.7 1021.4" stroke="#7c7c82" stroke-width="1.4" fill="none" stroke-linejoin="round"/><path d="M1671.2 1264 L1673.6 898.3 L1675.7 1264" stroke="#7c7c82" stroke-width="1.4" fill="none" stroke-linejoin="round"/><path d="M1078.2 812.0 C1078.5 805.0 1078.9 781.0 1080.0 770.0 C1081.1 759.0 1082.9 748.5 1084.6 746.0 C1086.3 743.5 1088.2 750.0 1090.0 755.0 C1091.8 760.0 1094.8 772.5 1095.7 776.0" stroke="#7c7c82" stroke-width="1.4" fill="none" stroke-dasharray="4 3"/><path d="M2019.7 1021.4 C2020.7 1023.4 2023.7 1020.3 2025.7 1033.4 C2027.7 1046.5 2030.0 1061.6 2031.7 1100.0 C2033.4 1138.4 2035.3 1236.7 2036.0 1264.0" stroke="#7c7c82" stroke-width="1.4" fill="none" stroke-dasharray="4 3"/></svg>
<div class="a" style="left:123px;top:1264.3px;width:1980.5px;height:5px;background:#1e1d24"></div>
<div class="a" style="left:123px;top:1269px;width:1980.5px;height:1px;background:#3a3a44"></div>
<div class="t" style="left:842px;top:1289px;font-size:15.5px;color:#a6a6ae;">Breath</div>
<div class="a" style="left:926px;top:1283px;width:1px;height:30px;background:#33343c"></div>
<svg class="a" style="left:981px;top:1290px" width="12" height="12"><path d="M1.5 10.5 L2.2 8 L8 2.2 L9.8 4 L4 9.8Z M8.8 1.4 L9.6 0.6 Q10.2 0 10.8 0.6 L11.4 1.2 Q12 1.8 11.4 2.4 L10.6 3.2Z" fill="#a6a6ae"/></svg>
<div class="t" style="left:996px;top:1289px;font-size:15.6px;color:#a6a6ae;">Power</div>
<svg class="a" style="left:1071px;top:1290px" width="12" height="12"><path d="M1.5 10.5 L2.2 8 L8 2.2 L9.8 4 L4 9.8Z M8.8 1.4 L9.6 0.6 Q10.2 0 10.8 0.6 L11.4 1.2 Q12 1.8 11.4 2.4 L10.6 3.2Z" fill="#a6a6ae"/></svg>
<div class="t" style="left:1086px;top:1289px;font-size:15.6px;color:#a6a6ae;">Soft</div>
<svg class="a" style="left:1145px;top:1290px" width="12" height="12"><path d="M1.5 10.5 L2.2 8 L8 2.2 L9.8 4 L4 9.8Z M8.8 1.4 L9.6 0.6 Q10.2 0 10.8 0.6 L11.4 1.2 Q12 1.8 11.4 2.4 L10.6 3.2Z" fill="#a6a6ae"/></svg>
<div class="t" style="left:1160px;top:1289px;font-size:15.6px;color:#a6a6ae;">Breathy</div>
<svg class="a" style="left:1244px;top:1290px" width="12" height="12"><path d="M1.5 10.5 L2.2 8 L8 2.2 L9.8 4 L4 9.8Z M8.8 1.4 L9.6 0.6 Q10.2 0 10.8 0.6 L11.4 1.2 Q12 1.8 11.4 2.4 L10.6 3.2Z" fill="#a6a6ae"/></svg>
<div class="t" style="left:1260px;top:1289px;font-size:15.6px;color:#a6a6ae;">Chest</div>
<svg class="a" style="left:1331px;top:1290px" width="12" height="12"><path d="M1.5 10.5 L2.2 8 L8 2.2 L9.8 4 L4 9.8Z M8.8 1.4 L9.6 0.6 Q10.2 0 10.8 0.6 L11.4 1.2 Q12 1.8 11.4 2.4 L10.6 3.2Z" fill="#a6a6ae"/></svg>
<div class="t" style="left:1347px;top:1289px;font-size:15.6px;color:#a6a6ae;">Rap</div>
</div></div>
<div class="a" style="left:1029px;top:1356px;width:84px;height:40px;border-radius:9px 9px 0 0;background:#25262e;border:1px solid #34353e"></div>
<div class="t" style="left:1040px;top:1362px;font-size:18px;color:#f6f6f8;-webkit-text-stroke:0.3px #f6f6f8;">Show</div>
<svg class="a" style="left:1092px;top:1364px" width="14" height="12"><path d="M2 8.5 L7 3.5 L12 8.5" stroke="#fff" stroke-width="1.7" fill="none"/></svg>
<div class="a" style="left:190px;top:1371px;width:9px;height:9px;border-radius:50%;background:rgba(255,255,255,.09)"></div>
<div class="a" style="left:205px;top:1371px;width:128px;height:10px;border-radius:6px;background:rgba(255,255,255,.12)"></div>
<div class="a" style="left:338px;top:1371px;width:9px;height:9px;border-radius:50%;background:rgba(255,255,255,.09)"></div>
<div class="a" style="left:118px;top:1222px;width:40.7px;height:60px;border-radius:6px 0 0 6px;background:rgba(20,20,26,.5)"></div>
<div class="a" style="left:158.7px;top:1264.3px;width:19.3px;height:17.7px;border-radius:0 0 6px 0;background:rgba(20,20,26,.5)"></div>
<div class="a" style="left:158.7px;top:1222px;width:19.3px;height:42.3px;border-radius:0 6px 0 0;background:rgba(60,60,80,.22)"></div>
<svg class="a" style="left:118px;top:1222px" width="60" height="60" viewBox="118 1222 60 60">
<circle cx="137.5" cy="1237.3" r="2.2" fill="#9c9ca4"/><circle cx="155.5" cy="1237.3" r="2.2" fill="#9c9ca4"/>
<path d="M146 1245 L146 1257 L151.5 1257" stroke="#9c9ca4" stroke-width="2.6" fill="none"/>
<path d="M131.5 1264.5 Q147 1274 163 1266" stroke="#9c9ca4" stroke-width="2.6" fill="none"/></svg>
<div class="t" style="left:113px;top:1290px;font-size:20px;font-weight:bold;color:rgba(30,30,38,.6);">kytary</div>
</body></html>
